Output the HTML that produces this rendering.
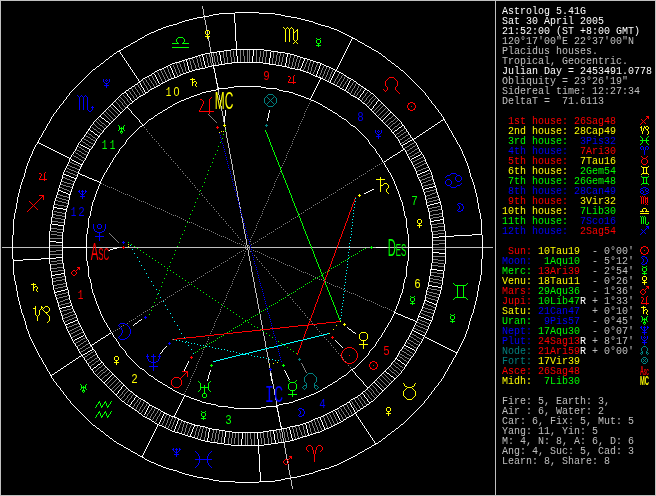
<!DOCTYPE html>
<html><head><meta charset="utf-8"><title>Astrolog 5.41G</title>
<style>
html,body{margin:0;padding:0;background:#000;overflow:hidden}
svg{display:block}
.m{font-family:"Liberation Mono",monospace;font-size:10px;white-space:pre}
.h{font-family:"Liberation Sans",sans-serif;font-size:12px;text-anchor:middle}
.c{font-family:"Liberation Sans",sans-serif;font-variant:small-caps;text-anchor:middle}
</style></head><body>
<svg width="656" height="496" viewBox="0 0 656 496">
<rect width="656" height="496" fill="#000"/>
<g fill="none" stroke-width="1" shape-rendering="crispEdges" transform="translate(0,0.5)">
<path stroke="#c0c0c0" d="M0 0h656M0 1h1M495 1h1M655 1h1M0 2h1M495 2h1M655 2h1M0 3h1M495 3h1M655 3h1M0 4h1M495 4h1M655 4h1M0 5h1M495 5h1M655 5h1M0 6h1M202 6h1M495 6h1M655 6h1M0 7h1M202 7h1M495 7h1M655 7h1M0 8h1M202 8h1M495 8h1M655 8h1M0 9h1M203 9h1M495 9h1M655 9h1M0 10h1M203 10h1M495 10h1M655 10h1M0 11h1M203 11h1M495 11h1M655 11h1M0 12h1M203 12h1M495 12h1M655 12h1M0 13h1M203 13h1M495 13h1M655 13h1M0 14h1M203 14h1M495 14h1M655 14h1M0 15h1M204 15h1M495 15h1M655 15h1M0 16h1M495 16h1M655 16h1M0 17h1M204 17h1M495 17h1M655 17h1M0 18h1M204 18h1M495 18h1M655 18h1M0 19h1M204 19h1M495 19h1M655 19h1M0 20h1M205 20h1M495 20h1M655 20h1M0 21h1M205 21h1M495 21h1M655 21h1M0 22h1M205 22h1M495 22h1M655 22h1M0 23h1M205 23h1M495 23h1M655 23h1M0 24h1M205 24h1M495 24h1M655 24h1M0 25h1M206 25h1M495 25h1M655 25h1M0 26h1M206 26h1M495 26h1M655 26h1M0 27h1M206 27h1M495 27h1M655 27h1M0 28h1M206 28h1M495 28h1M655 28h1M0 29h1M206 29h1M495 29h1M655 29h1M0 30h1M495 30h1M655 30h1M0 31h1M207 31h1M495 31h1M655 31h1M0 32h1M207 32h1M495 32h1M655 32h1M0 33h1M207 33h1M495 33h1M655 33h1M0 34h1M495 34h1M655 34h1M0 35h1M495 35h1M655 35h1M0 36h1M495 36h1M655 36h1M0 37h1M208 37h1M495 37h1M655 37h1M0 38h1M208 38h1M495 38h1M655 38h1M0 39h1M208 39h1M495 39h1M655 39h1M0 40h1M208 40h1M495 40h1M655 40h1M0 41h1M209 41h1M495 41h1M655 41h1M0 42h1M209 42h1M495 42h1M655 42h1M0 43h1M209 43h1M495 43h1M655 43h1M0 44h1M209 44h1M495 44h1M655 44h1M0 45h1M209 45h1M495 45h1M655 45h1M0 46h1M209 46h1M495 46h1M655 46h1M0 47h1M210 47h1M495 47h1M655 47h1M0 48h1M210 48h1M495 48h1M655 48h1M0 49h1M210 49h1M495 49h1M655 49h1M0 50h1M210 50h1M495 50h1M655 50h1M0 51h1M210 51h1M495 51h1M655 51h1M0 52h1M495 52h1M655 52h1M0 53h1M211 53h1M495 53h1M655 53h1M0 54h1M211 54h1M495 54h1M655 54h1M0 55h1M211 55h1M495 55h1M655 55h1M0 56h1M211 56h1M495 56h1M655 56h1M0 57h1M212 57h1M495 57h1M655 57h1M0 58h1M212 58h1M495 58h1M655 58h1M0 59h1M212 59h1M495 59h1M655 59h1M0 60h1M212 60h1M495 60h1M655 60h1M0 61h1M212 61h1M495 61h1M655 61h1M0 62h1M212 62h1M495 62h1M655 62h1M0 63h1M213 63h1M495 63h1M655 63h1M0 64h1M213 64h1M495 64h1M655 64h1M0 65h1M495 65h1M655 65h1M0 66h1M495 66h1M655 66h1M0 67h1M495 67h1M655 67h1M0 68h1M214 68h1M495 68h1M655 68h1M0 69h1M495 69h1M655 69h1M0 70h1M495 70h1M655 70h1M0 71h1M495 71h1M655 71h1M0 72h1M495 72h1M655 72h1M0 73h1M495 73h1M655 73h1M0 74h1M495 74h1M655 74h1M0 75h1M495 75h1M655 75h1M0 76h1M495 76h1M655 76h1M0 77h1M495 77h1M655 77h1M0 78h1M215 78h1M495 78h1M655 78h1M0 79h1M495 79h1M655 79h1M0 80h1M495 80h1M655 80h1M0 81h1M495 81h1M655 81h1M0 82h1M495 82h1M655 82h1M0 83h1M216 83h1M495 83h1M655 83h1M0 84h1M495 84h1M655 84h1M0 85h1M495 85h1M655 85h1M0 86h1M495 86h1M655 86h1M0 87h1M217 87h1M495 87h1M655 87h1M0 88h1M217 88h1M495 88h1M655 88h1M0 89h1M495 89h1M655 89h1M0 90h1M218 90h1M495 90h1M655 90h1M0 91h1M218 91h1M495 91h1M655 91h1M0 92h1M218 92h1M495 92h1M655 92h1M0 93h1M218 93h1M495 93h1M655 93h1M0 94h1M218 94h1M495 94h1M655 94h1M0 95h1M219 95h1M495 95h1M655 95h1M0 96h1M219 96h1M495 96h1M655 96h1M0 97h1M219 97h1M495 97h1M655 97h1M0 98h1M219 98h1M495 98h1M655 98h1M0 99h1M219 99h1M495 99h1M655 99h1M0 100h1M220 100h1M495 100h1M655 100h1M0 101h1M220 101h1M495 101h1M655 101h1M0 102h1M220 102h1M495 102h1M655 102h1M0 103h1M220 103h1M495 103h1M655 103h1M0 104h1M220 104h1M495 104h1M655 104h1M0 105h1M220 105h1M495 105h1M655 105h1M0 106h1M221 106h1M495 106h1M655 106h1M0 107h1M221 107h1M495 107h1M655 107h1M0 108h1M221 108h1M495 108h1M655 108h1M0 109h1M221 109h1M495 109h1M655 109h1M0 110h1M221 110h1M495 110h1M655 110h1M0 111h1M222 111h1M495 111h1M655 111h1M0 112h1M222 112h1M495 112h1M655 112h1M0 113h1M222 113h1M495 113h1M655 113h1M0 114h1M222 114h1M495 114h1M655 114h1M0 115h1M222 115h1M495 115h1M655 115h1M0 116h1M223 116h1M495 116h1M655 116h1M0 117h1M223 117h1M495 117h1M655 117h1M0 118h1M223 118h1M495 118h1M655 118h1M0 119h1M223 119h1M495 119h1M655 119h1M0 120h1M223 120h1M495 120h1M655 120h1M0 121h1M223 121h1M495 121h1M655 121h1M0 122h1M224 122h1M495 122h1M655 122h1M0 123h1M224 123h1M495 123h1M655 123h1M0 124h1M495 124h1M655 124h1M0 125h1M495 125h1M655 125h1M0 126h1M495 126h1M655 126h1M0 127h1M225 127h1M495 127h1M655 127h1M0 128h1M225 128h1M495 128h1M655 128h1M0 129h1M225 129h1M495 129h1M655 129h1M0 130h1M495 130h1M655 130h1M0 131h1M225 131h1M495 131h1M655 131h1M0 132h1M226 132h1M495 132h1M655 132h1M0 133h1M226 133h1M495 133h1M655 133h1M0 134h1M226 134h1M495 134h1M655 134h1M0 135h1M226 135h1M495 135h1M655 135h1M0 136h1M226 136h1M495 136h1M655 136h1M0 137h1M226 137h1M495 137h1M655 137h1M0 138h1M227 138h1M495 138h1M655 138h1M0 139h1M227 139h1M495 139h1M655 139h1M0 140h1M227 140h1M495 140h1M655 140h1M0 141h1M227 141h1M495 141h1M655 141h1M0 142h1M227 142h1M495 142h1M655 142h1M0 143h1M228 143h1M495 143h1M655 143h1M0 144h1M228 144h1M495 144h1M655 144h1M0 145h1M228 145h1M495 145h1M655 145h1M0 146h1M228 146h1M495 146h1M655 146h1M0 147h1M228 147h1M495 147h1M655 147h1M0 148h1M229 148h1M495 148h1M655 148h1M0 149h1M229 149h1M495 149h1M655 149h1M0 150h1M229 150h1M495 150h1M655 150h1M0 151h1M229 151h1M495 151h1M655 151h1M0 152h1M229 152h1M495 152h1M655 152h1M0 153h1M229 153h1M495 153h1M655 153h1M0 154h1M230 154h1M495 154h1M655 154h1M0 155h1M230 155h1M495 155h1M655 155h1M0 156h1M230 156h1M495 156h1M655 156h1M0 157h1M230 157h1M495 157h1M655 157h1M0 158h1M230 158h1M495 158h1M655 158h1M0 159h1M231 159h1M495 159h1M655 159h1M0 160h1M231 160h1M495 160h1M655 160h1M0 161h1M231 161h1M495 161h1M655 161h1M0 162h1M231 162h1M495 162h1M655 162h1M0 163h1M231 163h1M495 163h1M655 163h1M0 164h1M232 164h1M495 164h1M655 164h1M0 165h1M232 165h1M495 165h1M655 165h1M0 166h1M232 166h1M495 166h1M655 166h1M0 167h1M232 167h1M495 167h1M655 167h1M0 168h1M232 168h1M495 168h1M655 168h1M0 169h1M232 169h1M495 169h1M655 169h1M0 170h1M233 170h1M495 170h1M655 170h1M0 171h1M233 171h1M495 171h1M655 171h1M0 172h1M233 172h1M495 172h1M655 172h1M0 173h1M233 173h1M495 173h1M655 173h1M0 174h1M233 174h1M495 174h1M655 174h1M0 175h1M234 175h1M495 175h1M655 175h1M0 176h1M234 176h1M495 176h1M655 176h1M0 177h1M234 177h1M495 177h1M655 177h1M0 178h1M234 178h1M495 178h1M655 178h1M0 179h1M234 179h1M495 179h1M655 179h1M0 180h1M234 180h1M495 180h1M655 180h1M0 181h1M235 181h1M495 181h1M655 181h1M0 182h1M235 182h1M495 182h1M655 182h1M0 183h1M235 183h1M495 183h1M655 183h1M0 184h1M235 184h1M495 184h1M655 184h1M0 185h1M235 185h1M495 185h1M655 185h1M0 186h1M236 186h1M495 186h1M655 186h1M0 187h1M236 187h1M495 187h1M655 187h1M0 188h1M236 188h1M495 188h1M655 188h1M0 189h1M236 189h1M495 189h1M655 189h1M0 190h1M236 190h1M495 190h1M655 190h1M0 191h1M237 191h1M495 191h1M655 191h1M0 192h1M237 192h1M495 192h1M655 192h1M0 193h1M237 193h1M495 193h1M655 193h1M0 194h1M237 194h1M495 194h1M655 194h1M0 195h1M237 195h1M495 195h1M655 195h1M0 196h1M237 196h1M495 196h1M655 196h1M0 197h1M238 197h1M495 197h1M655 197h1M0 198h1M238 198h1M495 198h1M655 198h1M0 199h1M238 199h1M495 199h1M655 199h1M0 200h1M238 200h1M495 200h1M655 200h1M0 201h1M495 201h1M655 201h1M0 202h1M239 202h1M495 202h1M655 202h1M0 203h1M239 203h1M495 203h1M655 203h1M0 204h1M239 204h1M495 204h1M655 204h1M0 205h1M495 205h1M655 205h1M0 206h1M239 206h1M495 206h1M655 206h1M0 207h1M240 207h1M495 207h1M655 207h1M0 208h1M240 208h1M495 208h1M655 208h1M0 209h1M495 209h1M655 209h1M0 210h1M240 210h1M495 210h1M655 210h1M0 211h1M495 211h1M655 211h1M0 212h1M240 212h1M495 212h1M655 212h1M0 213h1M495 213h1M655 213h1M0 214h1M241 214h1M495 214h1M655 214h1M0 215h1M495 215h1M655 215h1M0 216h1M241 216h1M495 216h1M655 216h1M0 217h1M241 217h1M495 217h1M655 217h1M0 218h1M242 218h1M495 218h1M655 218h1M0 219h1M242 219h1M495 219h1M655 219h1M0 220h1M242 220h1M495 220h1M655 220h1M0 221h1M242 221h1M495 221h1M655 221h1M0 222h1M242 222h1M495 222h1M655 222h1M0 223h1M243 223h1M495 223h1M655 223h1M0 224h1M243 224h1M495 224h1M655 224h1M0 225h1M243 225h1M495 225h1M655 225h1M0 226h1M243 226h1M495 226h1M655 226h1M0 227h1M243 227h1M495 227h1M655 227h1M0 228h1M243 228h1M495 228h1M655 228h1M0 229h1M244 229h1M495 229h1M655 229h1M0 230h1M244 230h1M495 230h1M655 230h1M0 231h1M244 231h1M495 231h1M655 231h1M0 232h1M244 232h1M495 232h1M655 232h1M0 233h1M244 233h1M495 233h1M655 233h1M0 234h1M245 234h1M495 234h1M655 234h1M0 235h1M245 235h1M495 235h1M655 235h1M0 236h1M245 236h1M495 236h1M655 236h1M0 237h1M245 237h1M495 237h1M655 237h1M0 238h1M245 238h1M495 238h1M655 238h1M0 239h1M246 239h1M495 239h1M655 239h1M0 240h1M246 240h1M495 240h1M655 240h1M0 241h1M246 241h1M495 241h1M655 241h1M0 242h1M246 242h1M495 242h1M655 242h1M0 243h1M246 243h1M495 243h1M655 243h1M0 244h1M246 244h1M495 244h1M655 244h1M0 245h1M247 245h1M495 245h1M655 245h1M0 246h1M247 246h1M495 246h1M655 246h1M0 247h1M2 247h10M13 247h36M87 247h30M119 247h3M125 247h122M248 247h2M251 247h60M312 247h25M338 247h32M373 247h3M387 247h21M446 247h36M483 247h10M495 247h1M655 247h1M0 248h1M247 248h1M495 248h1M655 248h1M0 249h1M247 249h1M495 249h1M655 249h1M0 250h1M248 250h1M495 250h1M655 250h1M0 251h1M248 251h1M495 251h1M655 251h1M0 252h1M248 252h1M495 252h1M655 252h1M0 253h1M248 253h1M495 253h1M655 253h1M0 254h1M248 254h1M495 254h1M655 254h1M0 255h1M248 255h1M495 255h1M655 255h1M0 256h1M249 256h1M495 256h1M655 256h1M0 257h1M249 257h1M495 257h1M655 257h1M0 258h1M249 258h1M495 258h1M655 258h1M0 259h1M249 259h1M495 259h1M655 259h1M0 260h1M249 260h1M495 260h1M655 260h1M0 261h1M250 261h1M495 261h1M655 261h1M0 262h1M250 262h1M495 262h1M655 262h1M0 263h1M250 263h1M495 263h1M655 263h1M0 264h1M250 264h1M495 264h1M655 264h1M0 265h1M250 265h1M495 265h1M655 265h1M0 266h1M251 266h1M495 266h1M655 266h1M0 267h1M251 267h1M495 267h1M655 267h1M0 268h1M251 268h1M495 268h1M655 268h1M0 269h1M251 269h1M495 269h1M655 269h1M0 270h1M251 270h1M495 270h1M655 270h1M0 271h1M251 271h1M495 271h1M655 271h1M0 272h1M252 272h1M495 272h1M655 272h1M0 273h1M252 273h1M495 273h1M655 273h1M0 274h1M252 274h1M495 274h1M655 274h1M0 275h1M252 275h1M495 275h1M655 275h1M0 276h1M252 276h1M495 276h1M655 276h1M0 277h1M253 277h1M495 277h1M655 277h1M0 278h1M253 278h1M495 278h1M655 278h1M0 279h1M253 279h1M495 279h1M655 279h1M0 280h1M253 280h1M495 280h1M655 280h1M0 281h1M253 281h1M495 281h1M655 281h1M0 282h1M254 282h1M495 282h1M655 282h1M0 283h1M254 283h1M495 283h1M655 283h1M0 284h1M254 284h1M495 284h1M655 284h1M0 285h1M254 285h1M495 285h1M655 285h1M0 286h1M254 286h1M495 286h1M655 286h1M0 287h1M254 287h1M495 287h1M655 287h1M0 288h1M255 288h1M495 288h1M655 288h1M0 289h1M255 289h1M495 289h1M655 289h1M0 290h1M255 290h1M495 290h1M655 290h1M0 291h1M255 291h1M495 291h1M655 291h1M0 292h1M255 292h1M495 292h1M655 292h1M0 293h1M256 293h1M495 293h1M655 293h1M0 294h1M256 294h1M495 294h1M655 294h1M0 295h1M256 295h1M495 295h1M655 295h1M0 296h1M256 296h1M495 296h1M655 296h1M0 297h1M256 297h1M495 297h1M655 297h1M0 298h1M257 298h1M495 298h1M655 298h1M0 299h1M257 299h1M495 299h1M655 299h1M0 300h1M257 300h1M495 300h1M655 300h1M0 301h1M257 301h1M495 301h1M655 301h1M0 302h1M257 302h1M495 302h1M655 302h1M0 303h1M257 303h1M495 303h1M655 303h1M0 304h1M258 304h1M495 304h1M655 304h1M0 305h1M258 305h1M495 305h1M655 305h1M0 306h1M258 306h1M495 306h1M655 306h1M0 307h1M258 307h1M495 307h1M655 307h1M0 308h1M258 308h1M495 308h1M655 308h1M0 309h1M259 309h1M495 309h1M655 309h1M0 310h1M259 310h1M495 310h1M655 310h1M0 311h1M259 311h1M495 311h1M655 311h1M0 312h1M259 312h1M495 312h1M655 312h1M0 313h1M495 313h1M655 313h1M0 314h1M260 314h1M495 314h1M655 314h1M0 315h1M260 315h1M495 315h1M655 315h1M0 316h1M260 316h1M495 316h1M655 316h1M0 317h1M260 317h1M495 317h1M655 317h1M0 318h1M260 318h1M495 318h1M655 318h1M0 319h1M260 319h1M495 319h1M655 319h1M0 320h1M261 320h1M495 320h1M655 320h1M0 321h1M261 321h1M495 321h1M655 321h1M0 322h1M261 322h1M495 322h1M655 322h1M0 323h1M261 323h1M495 323h1M655 323h1M0 324h1M261 324h1M495 324h1M655 324h1M0 325h1M262 325h1M495 325h1M655 325h1M0 326h1M262 326h1M495 326h1M655 326h1M0 327h1M262 327h1M495 327h1M655 327h1M0 328h1M262 328h1M495 328h1M655 328h1M0 329h1M495 329h1M655 329h1M0 330h1M262 330h1M495 330h1M655 330h1M0 331h1M495 331h1M655 331h1M0 332h1M263 332h1M495 332h1M655 332h1M0 333h1M263 333h1M495 333h1M655 333h1M0 334h1M263 334h1M495 334h1M655 334h1M0 335h1M263 335h1M495 335h1M655 335h1M0 336h1M264 336h1M495 336h1M655 336h1M0 337h1M264 337h1M495 337h1M655 337h1M0 338h1M264 338h1M495 338h1M655 338h1M0 339h1M264 339h1M495 339h1M655 339h1M0 340h1M264 340h1M495 340h1M655 340h1M0 341h1M265 341h1M495 341h1M655 341h1M0 342h1M265 342h1M495 342h1M655 342h1M0 343h1M265 343h1M495 343h1M655 343h1M0 344h1M265 344h1M495 344h1M655 344h1M0 345h1M265 345h1M495 345h1M655 345h1M0 346h1M265 346h1M495 346h1M655 346h1M0 347h1M266 347h1M495 347h1M655 347h1M0 348h1M495 348h1M655 348h1M0 349h1M266 349h1M495 349h1M655 349h1M0 350h1M266 350h1M495 350h1M655 350h1M0 351h1M266 351h1M495 351h1M655 351h1M0 352h1M267 352h1M495 352h1M655 352h1M0 353h1M267 353h1M495 353h1M655 353h1M0 354h1M267 354h1M495 354h1M655 354h1M0 355h1M267 355h1M495 355h1M655 355h1M0 356h1M267 356h1M495 356h1M655 356h1M0 357h1M268 357h1M495 357h1M655 357h1M0 358h1M268 358h1M495 358h1M655 358h1M0 359h1M268 359h1M495 359h1M655 359h1M0 360h1M268 360h1M495 360h1M655 360h1M0 361h1M268 361h1M495 361h1M655 361h1M0 362h1M268 362h1M495 362h1M655 362h1M0 363h1M269 363h1M495 363h1M655 363h1M0 364h1M495 364h1M655 364h1M0 365h1M269 365h1M495 365h1M655 365h1M0 366h1M269 366h1M495 366h1M655 366h1M0 367h1M269 367h1M495 367h1M655 367h1M0 368h1M495 368h1M655 368h1M0 369h1M495 369h1M655 369h1M0 370h1M495 370h1M655 370h1M0 371h1M270 371h1M495 371h1M655 371h1M0 372h1M270 372h1M495 372h1M655 372h1M0 373h1M271 373h1M495 373h1M655 373h1M0 374h1M271 374h1M495 374h1M655 374h1M0 375h1M271 375h1M495 375h1M655 375h1M0 376h1M495 376h1M655 376h1M0 377h1M495 377h1M655 377h1M0 378h1M495 378h1M655 378h1M0 379h1M272 379h1M495 379h1M655 379h1M0 380h1M272 380h1M495 380h1M655 380h1M0 381h1M495 381h1M655 381h1M0 382h1M495 382h1M655 382h1M0 383h1M495 383h1M655 383h1M0 384h1M273 384h1M495 384h1M655 384h1M0 385h1M273 385h1M495 385h1M655 385h1M0 386h1M273 386h1M495 386h1M655 386h1M0 387h1M273 387h1M495 387h1M655 387h1M0 388h1M273 388h1M495 388h1M655 388h1M0 389h1M274 389h1M495 389h1M655 389h1M0 390h1M274 390h1M495 390h1M655 390h1M0 391h1M274 391h1M495 391h1M655 391h1M0 392h1M274 392h1M495 392h1M655 392h1M0 393h1M274 393h1M495 393h1M655 393h1M0 394h1M274 394h1M495 394h1M655 394h1M0 395h1M275 395h1M495 395h1M655 395h1M0 396h1M275 396h1M495 396h1M655 396h1M0 397h1M275 397h1M495 397h1M655 397h1M0 398h1M275 398h1M495 398h1M655 398h1M0 399h1M275 399h1M495 399h1M655 399h1M0 400h1M276 400h1M495 400h1M655 400h1M0 401h1M276 401h1M495 401h1M655 401h1M0 402h1M276 402h1M495 402h1M655 402h1M0 403h1M276 403h1M495 403h1M655 403h1M0 404h1M276 404h1M495 404h1M655 404h1M0 405h1M495 405h1M655 405h1M0 406h1M277 406h1M495 406h1M655 406h1M0 407h1M277 407h1M495 407h1M655 407h1M0 408h1M495 408h1M655 408h1M0 409h1M495 409h1M655 409h1M0 410h1M495 410h1M655 410h1M0 411h1M278 411h1M495 411h1M655 411h1M0 412h1M495 412h1M655 412h1M0 413h1M495 413h1M655 413h1M0 414h1M495 414h1M655 414h1M0 415h1M495 415h1M655 415h1M0 416h1M279 416h1M495 416h1M655 416h1M0 417h1M495 417h1M655 417h1M0 418h1M495 418h1M655 418h1M0 419h1M495 419h1M655 419h1M0 420h1M495 420h1M655 420h1M0 421h1M495 421h1M655 421h1M0 422h1M495 422h1M655 422h1M0 423h1M495 423h1M655 423h1M0 424h1M495 424h1M655 424h1M0 425h1M495 425h1M655 425h1M0 426h1M280 426h1M495 426h1M655 426h1M0 427h1M495 427h1M655 427h1M0 428h1M495 428h1M655 428h1M0 429h1M495 429h1M655 429h1M0 430h1M281 430h1M495 430h1M655 430h1M0 431h1M281 431h1M495 431h1M655 431h1M0 432h1M282 432h1M495 432h1M655 432h1M0 433h1M282 433h1M495 433h1M655 433h1M0 434h1M282 434h1M495 434h1M655 434h1M0 435h1M282 435h1M495 435h1M655 435h1M0 436h1M282 436h1M495 436h1M655 436h1M0 437h1M282 437h1M495 437h1M655 437h1M0 438h1M283 438h1M495 438h1M655 438h1M0 439h1M283 439h1M495 439h1M655 439h1M0 440h1M283 440h1M495 440h1M655 440h1M0 441h1M283 441h1M495 441h1M655 441h1M0 442h1M495 442h1M655 442h1M0 443h1M284 443h1M495 443h1M655 443h1M0 444h1M284 444h1M495 444h1M655 444h1M0 445h1M284 445h1M495 445h1M655 445h1M0 446h1M284 446h1M495 446h1M655 446h1M0 447h1M284 447h1M495 447h1M655 447h1M0 448h1M285 448h1M495 448h1M655 448h1M0 449h1M285 449h1M495 449h1M655 449h1M0 450h1M285 450h1M495 450h1M655 450h1M0 451h1M285 451h1M495 451h1M655 451h1M0 452h1M285 452h1M495 452h1M655 452h1M0 453h1M285 453h1M495 453h1M655 453h1M0 454h1M286 454h1M495 454h1M655 454h1M0 455h1M286 455h1M495 455h1M655 455h1M0 456h1M286 456h1M495 456h1M655 456h1M0 457h1M286 457h1M495 457h1M655 457h1M0 458h1M286 458h1M495 458h1M655 458h1M0 459h1M287 459h1M495 459h1M655 459h1M0 460h1M495 460h1M655 460h1M0 461h1M287 461h1M495 461h1M655 461h1M0 462h1M287 462h1M495 462h1M655 462h1M0 463h1M495 463h1M655 463h1M0 464h1M288 464h1M495 464h1M655 464h1M0 465h1M288 465h1M495 465h1M655 465h1M0 466h1M288 466h1M495 466h1M655 466h1M0 467h1M288 467h1M495 467h1M655 467h1M0 468h1M288 468h1M495 468h1M655 468h1M0 469h1M288 469h1M495 469h1M655 469h1M0 470h1M289 470h1M495 470h1M655 470h1M0 471h1M289 471h1M495 471h1M655 471h1M0 472h1M289 472h1M495 472h1M655 472h1M0 473h1M289 473h1M495 473h1M655 473h1M0 474h1M289 474h1M495 474h1M655 474h1M0 475h1M290 475h1M495 475h1M655 475h1M0 476h1M290 476h1M495 476h1M655 476h1M0 477h1M290 477h1M495 477h1M655 477h1M0 478h1M495 478h1M655 478h1M0 479h1M290 479h1M495 479h1M655 479h1M0 480h1M291 480h1M495 480h1M655 480h1M0 481h1M291 481h1M495 481h1M655 481h1M0 482h1M291 482h1M495 482h1M655 482h1M0 483h1M291 483h1M495 483h1M655 483h1M0 484h1M291 484h1M495 484h1M655 484h1M0 485h1M291 485h1M495 485h1M655 485h1M0 486h1M292 486h1M495 486h1M655 486h1M0 487h1M292 487h1M495 487h1M655 487h1M0 488h1M292 488h1M495 488h1M655 488h1M0 489h1M495 489h1M655 489h1M0 490h1M495 490h1M655 490h1M0 491h1M495 491h1M655 491h1M0 492h1M495 492h1M655 492h1M0 493h1M495 493h1M655 493h1M0 494h1M495 494h1M655 494h1M0 495h656"/>
<path stroke="#ffffff" d="M235 12h24M219 13h16M259 13h16M213 14h6M234 14h1M275 14h6M209 15h4M234 15h1M281 15h4M203 16h6M234 16h1M285 16h6M197 17h6M234 17h1M291 17h6M193 18h4M234 18h1M297 18h4M189 19h4M234 19h1M301 19h4M185 20h4M234 20h1M305 20h4M182 21h3M234 21h1M309 21h4M179 22h3M234 22h1M313 22h2M177 23h2M235 23h1M315 23h3M173 24h4M235 24h1M318 24h3M169 25h4M235 25h1M321 25h4M166 26h3M235 26h1M325 26h4M163 27h3M235 27h1M329 27h2M161 28h2M235 28h1M331 28h3M158 29h3M235 29h1M334 29h3M156 30h2M235 30h1M337 30h2M154 31h2M235 31h1M339 31h2M151 32h3M235 32h1M341 32h2M149 33h2M235 33h1M343 33h2M147 34h2M235 34h1M345 34h2M145 35h2M235 35h1M347 35h2M144 36h1M235 36h1M349 36h2M142 37h2M235 37h1M351 37h2M140 38h2M235 38h1M352 38h3M138 39h2M235 39h1M351 39h1M355 39h2M137 40h1M235 40h1M351 40h1M357 40h1M135 41h2M236 41h1M350 41h1M358 41h2M133 42h2M236 42h1M350 42h1M360 42h2M131 43h2M236 43h1M349 43h1M362 43h2M130 44h1M236 44h1M349 44h1M364 44h1M128 45h2M236 45h1M348 45h1M365 45h2M126 46h2M236 46h1M348 46h1M367 46h2M124 47h2M236 47h1M347 47h1M369 47h2M123 48h1M236 48h1M347 48h1M371 48h1M121 49h2M231 49h33M346 49h1M372 49h2M119 50h2M224 50h7M236 50h1M253 50h1M264 50h7M346 50h1M374 50h2M117 51h3M217 51h7M236 51h1M253 51h1M271 51h7M345 51h1M376 51h2M116 52h1M120 52h1M210 52h7M219 52h1M236 52h1M253 52h1M270 52h1M278 52h7M345 52h1M378 52h1M114 53h2M120 53h1M205 53h5M219 53h1M236 53h1M253 53h1M270 53h1M285 53h5M344 53h1M379 53h2M113 54h1M121 54h1M201 54h4M219 54h1M236 54h1M253 54h1M270 54h1M287 54h1M290 54h4M344 54h1M381 54h1M112 55h1M122 55h1M198 55h3M202 55h1M220 55h1M236 55h1M253 55h1M270 55h1M287 55h1M294 55h3M343 55h1M382 55h1M110 56h2M122 56h1M195 56h3M202 56h1M220 56h1M237 56h1M252 56h1M270 56h1M287 56h1M297 56h3M343 56h1M383 56h2M109 57h1M123 57h1M192 57h3M203 57h1M220 57h1M237 57h1M252 57h1M270 57h1M286 57h1M300 57h3M342 57h1M385 57h1M108 58h1M124 58h1M188 58h4M203 58h1M220 58h1M237 58h1M252 58h1M269 58h1M286 58h1M303 58h4M342 58h1M386 58h1M106 59h2M124 59h1M185 59h3M203 59h1M220 59h1M237 59h1M252 59h1M269 59h1M286 59h1M304 59h1M307 59h3M341 59h1M387 59h1M105 60h1M125 60h1M182 60h3M186 60h1M203 60h1M220 60h1M237 60h1M252 60h1M269 60h1M286 60h1M304 60h1M310 60h3M341 60h1M388 60h2M104 61h1M126 61h1M179 61h3M186 61h1M204 61h1M221 61h1M237 61h1M252 61h1M269 61h1M286 61h1M303 61h1M313 61h3M340 61h1M390 61h1M103 62h1M126 62h1M175 62h4M187 62h1M204 62h1M221 62h1M232 62h31M269 62h1M286 62h1M303 62h1M316 62h4M340 62h1M391 62h1M101 63h2M127 63h1M172 63h3M187 63h1M204 63h1M221 63h1M225 63h7M263 63h7M285 63h1M302 63h1M320 63h2M339 63h1M392 63h2M100 64h1M128 64h1M170 64h2M187 64h1M204 64h1M219 64h6M269 64h7M285 64h1M302 64h1M320 64h1M322 64h2M339 64h1M394 64h1M99 65h1M128 65h1M168 65h2M187 65h1M205 65h1M212 65h7M276 65h6M285 65h1M302 65h1M320 65h1M324 65h2M338 65h1M395 65h1M97 66h2M129 66h1M166 66h2M170 66h1M188 66h1M205 66h1M208 66h4M213 66h1M282 66h5M301 66h1M319 66h1M326 66h3M338 66h1M396 66h2M96 67h1M130 67h1M164 67h2M170 67h1M188 67h1M205 67h3M213 67h1M287 67h3M301 67h1M319 67h1M329 67h2M337 67h1M398 67h1M95 68h1M130 68h1M162 68h2M171 68h1M188 68h1M200 68h5M213 68h1M290 68h5M300 68h1M319 68h1M331 68h2M337 68h1M399 68h1M93 69h2M131 69h1M159 69h3M171 69h1M188 69h1M195 69h5M214 69h1M295 69h6M318 69h1M333 69h2M336 69h1M400 69h1M92 70h1M132 70h1M157 70h2M172 70h1M189 70h1M192 70h3M214 70h1M300 70h3M318 70h1M335 70h2M401 70h2M91 71h1M132 71h1M155 71h2M172 71h1M189 71h3M214 71h1M303 71h3M317 71h1M335 71h1M337 71h2M403 71h1M90 72h1M133 72h1M154 72h1M172 72h1M186 72h3M214 72h1M306 72h3M317 72h1M334 72h1M339 72h2M404 72h1M89 73h1M134 73h1M152 73h2M173 73h1M183 73h3M215 73h1M309 73h2M317 73h1M334 73h1M341 73h2M405 73h1M88 74h1M134 74h1M151 74h1M154 74h1M173 74h1M181 74h2M215 74h1M311 74h2M316 74h1M333 74h1M343 74h1M406 74h1M87 75h1M135 75h1M149 75h2M155 75h1M174 75h1M179 75h2M215 75h1M313 75h2M316 75h1M333 75h1M344 75h2M407 75h1M86 76h1M136 76h1M147 76h2M155 76h1M174 76h1M177 76h2M215 76h1M315 76h3M332 76h1M346 76h1M408 76h1M85 77h1M136 77h1M145 77h2M156 77h1M174 77h3M215 77h1M318 77h3M332 77h1M347 77h2M409 77h1M84 78h1M137 78h1M143 78h2M156 78h1M171 78h3M216 78h1M320 78h3M331 78h1M349 78h2M410 78h1M83 79h1M138 79h1M142 79h1M157 79h1M169 79h2M216 79h1M320 79h1M323 79h2M331 79h1M351 79h2M411 79h1M82 80h1M138 80h1M141 80h1M157 80h1M167 80h2M216 80h1M319 80h1M325 80h2M330 80h1M350 80h1M353 80h1M412 80h1M81 81h1M139 81h2M158 81h1M165 81h2M216 81h1M319 81h1M327 81h2M330 81h1M349 81h1M354 81h2M413 81h1M80 82h1M138 82h2M158 82h1M163 82h2M216 82h1M318 82h1M329 82h2M349 82h1M356 82h1M414 82h1M79 83h1M137 83h1M140 83h1M159 83h1M161 83h2M217 83h1M318 83h1M331 83h2M348 83h1M357 83h1M415 83h1M78 84h1M135 84h2M140 84h1M160 84h1M217 84h1M317 84h1M333 84h2M348 84h1M358 84h2M416 84h1M77 85h1M134 85h1M141 85h1M158 85h2M217 85h1M317 85h1M335 85h2M347 85h1M360 85h1M417 85h1M76 86h1M132 86h2M141 86h1M156 86h2M217 86h1M234 86h27M316 86h1M337 86h2M347 86h1M361 86h2M418 86h1M75 87h1M131 87h1M142 87h1M154 87h2M218 87h1M228 87h6M261 87h5M316 87h1M339 87h1M346 87h1M363 87h1M419 87h1M74 88h1M129 88h2M143 88h1M152 88h2M218 88h10M266 88h11M315 88h1M340 88h2M346 88h1M364 88h2M420 88h1M73 89h1M128 89h1M143 89h1M150 89h2M216 89h3M277 89h2M315 89h1M342 89h2M345 89h1M365 89h2M421 89h1M72 90h1M126 90h2M144 90h1M149 90h1M211 90h5M279 90h4M314 90h1M344 90h2M364 90h1M367 90h2M422 90h1M71 91h1M125 91h1M144 91h1M148 91h1M206 91h5M283 91h6M314 91h1M346 91h1M363 91h1M369 91h1M423 91h1M70 92h1M124 92h2M145 92h3M202 92h4M289 92h4M313 92h1M347 92h2M363 92h1M370 92h1M424 92h1M69 93h1M122 93h2M126 93h1M145 93h1M200 93h2M293 93h2M313 93h1M349 93h1M362 93h1M371 93h2M425 93h1M69 94h1M121 94h1M127 94h1M143 94h2M197 94h3M295 94h3M312 94h1M350 94h1M361 94h1M373 94h1M425 94h1M68 95h1M120 95h1M127 95h1M141 95h2M194 95h3M298 95h3M312 95h1M351 95h2M360 95h1M374 95h1M426 95h1M67 96h1M119 96h1M128 96h1M139 96h2M191 96h3M301 96h3M311 96h1M353 96h2M360 96h1M375 96h1M427 96h1M66 97h1M118 97h1M129 97h1M138 97h1M189 97h2M304 97h2M311 97h1M355 97h2M359 97h1M376 97h1M428 97h1M66 98h1M117 98h1M130 98h1M137 98h1M186 98h3M306 98h3M310 98h1M357 98h2M377 98h1M428 98h1M65 99h1M116 99h1M130 99h1M135 99h2M184 99h2M309 99h2M358 99h2M378 99h1M429 99h1M64 100h1M115 100h1M131 100h1M134 100h1M181 100h3M311 100h3M360 100h1M378 100h2M430 100h1M63 101h1M114 101h1M132 101h2M179 101h2M314 101h2M361 101h1M377 101h1M380 101h1M431 101h1M63 102h1M113 102h1M132 102h1M177 102h2M316 102h2M362 102h1M376 102h1M381 102h1M431 102h1M62 103h1M112 103h1M130 103h2M175 103h2M318 103h2M363 103h2M376 103h1M382 103h1M432 103h1M61 104h1M111 104h2M129 104h1M173 104h2M320 104h2M365 104h1M375 104h1M383 104h1M433 104h1M60 105h1M110 105h1M113 105h1M128 105h1M172 105h1M322 105h1M366 105h1M374 105h1M384 105h1M434 105h1M59 106h1M109 106h1M114 106h1M127 106h1M170 106h2M323 106h2M367 106h1M373 106h1M385 106h1M435 106h1M59 107h1M108 107h1M115 107h1M126 107h2M168 107h2M325 107h2M368 107h1M373 107h1M386 107h1M435 107h1M58 108h1M107 108h1M116 108h1M125 108h1M128 108h1M167 108h1M327 108h1M369 108h1M372 108h1M387 108h1M436 108h1M57 109h1M106 109h1M117 109h1M124 109h1M129 109h1M165 109h2M328 109h2M370 109h2M388 109h1M437 109h1M56 110h1M105 110h1M118 110h1M123 110h1M130 110h1M163 110h2M225 110h1M269 110h1M330 110h2M371 110h1M389 110h1M438 110h1M56 111h1M104 111h1M119 111h1M122 111h1M131 111h1M162 111h1M225 111h1M269 111h1M332 111h1M372 111h1M390 111h1M438 111h1M55 112h1M103 112h1M120 112h2M131 112h1M160 112h2M225 112h1M269 112h1M333 112h2M373 112h1M390 112h2M439 112h1M54 113h1M102 113h1M120 113h1M132 113h1M158 113h2M225 113h1M268 113h1M335 113h2M374 113h1M389 113h1M392 113h1M440 113h1M53 114h1M101 114h1M119 114h1M133 114h1M157 114h1M225 114h1M268 114h1M337 114h1M375 114h1M388 114h1M393 114h1M441 114h1M53 115h1M100 115h1M118 115h1M134 115h1M155 115h2M225 115h1M268 115h1M338 115h1M376 115h1M387 115h1M394 115h1M441 115h1M52 116h1M99 116h2M117 116h1M135 116h1M154 116h1M224 116h1M268 116h1M339 116h2M377 116h1M386 116h1M395 116h1M442 116h1M51 117h1M98 117h1M101 117h1M116 117h1M136 117h1M153 117h1M224 117h1M268 117h1M341 117h1M378 117h1M385 117h1M396 117h1M443 117h1M51 118h1M97 118h1M102 118h2M115 118h1M137 118h1M151 118h2M224 118h1M267 118h1M342 118h2M379 118h1M384 118h1M397 118h1M443 118h1M50 119h1M96 119h1M104 119h1M114 119h1M138 119h1M149 119h2M224 119h1M267 119h1M344 119h2M380 119h1M383 119h1M398 119h1M443 119h2M50 120h1M95 120h1M105 120h1M113 120h1M139 120h1M148 120h1M224 120h1M267 120h1M346 120h1M381 120h2M399 120h1M441 120h2M444 120h1M49 121h1M94 121h1M106 121h2M112 121h1M139 121h1M147 121h1M224 121h1M347 121h1M382 121h1M400 121h1M440 121h1M445 121h1M49 122h1M93 122h1M108 122h1M111 122h1M140 122h1M146 122h1M348 122h1M383 122h1M401 122h1M438 122h2M445 122h1M48 123h1M93 123h1M109 123h2M141 123h1M145 123h1M349 123h1M384 123h1M401 123h1M437 123h1M446 123h1M47 124h1M92 124h1M109 124h1M142 124h1M144 124h1M350 124h1M385 124h1M402 124h1M435 124h2M447 124h1M47 125h1M91 125h1M108 125h1M142 125h2M351 125h2M386 125h1M402 125h2M434 125h1M447 125h1M46 126h1M90 126h1M107 126h1M140 126h2M353 126h2M387 126h1M401 126h1M404 126h1M432 126h2M448 126h1M46 127h1M90 127h1M106 127h1M139 127h1M355 127h1M388 127h1M399 127h2M404 127h1M431 127h1M448 127h1M45 128h1M89 128h1M105 128h1M138 128h1M356 128h1M389 128h1M398 128h1M405 128h1M429 128h2M449 128h1M45 129h1M88 129h2M104 129h1M137 129h1M357 129h1M390 129h1M397 129h1M406 129h1M428 129h1M449 129h1M44 130h1M88 130h1M90 130h1M103 130h1M136 130h1M358 130h1M391 130h1M395 130h2M406 130h1M426 130h2M450 130h1M43 131h1M87 131h1M91 131h2M103 131h1M135 131h1M359 131h1M391 131h1M394 131h1M407 131h1M425 131h1M451 131h1M43 132h1M86 132h1M93 132h1M102 132h1M134 132h1M360 132h1M392 132h2M408 132h1M423 132h2M451 132h1M42 133h1M86 133h1M94 133h1M101 133h1M133 133h1M361 133h1M393 133h1M408 133h1M422 133h1M452 133h1M42 134h1M85 134h1M95 134h2M100 134h1M132 134h1M362 134h1M394 134h1M409 134h1M420 134h2M452 134h1M41 135h1M84 135h1M97 135h1M99 135h1M131 135h1M363 135h1M395 135h1M410 135h1M419 135h1M453 135h1M41 136h1M84 136h1M98 136h2M130 136h1M364 136h1M395 136h1M410 136h1M417 136h2M453 136h1M40 137h1M83 137h1M98 137h1M129 137h1M365 137h1M396 137h1M411 137h1M416 137h1M454 137h1M39 138h1M82 138h1M97 138h1M128 138h1M366 138h1M397 138h1M412 138h1M414 138h2M455 138h1M39 139h1M81 139h1M96 139h1M127 139h1M367 139h1M398 139h1M412 139h2M455 139h1M38 140h1M81 140h1M96 140h1M126 140h1M368 140h1M398 140h1M410 140h2M413 140h1M456 140h1M38 141h1M80 141h1M95 141h1M126 141h1M368 141h1M399 141h1M408 141h2M414 141h1M456 141h1M37 142h2M79 142h1M95 142h1M125 142h1M369 142h1M399 142h1M407 142h1M415 142h1M457 142h1M37 143h1M39 143h2M78 143h1M94 143h1M125 143h1M369 143h1M400 143h1M405 143h2M416 143h1M457 143h1M36 144h1M41 144h2M78 144h1M80 144h1M94 144h1M124 144h1M370 144h1M400 144h1M403 144h2M416 144h1M458 144h1M35 145h1M43 145h2M77 145h1M81 145h2M93 145h1M123 145h1M371 145h1M401 145h2M417 145h1M459 145h1M35 146h1M45 146h2M77 146h1M83 146h2M92 146h1M122 146h1M372 146h1M402 146h1M417 146h1M459 146h1M34 147h1M47 147h2M76 147h1M85 147h2M92 147h1M121 147h1M373 147h1M402 147h1M418 147h1M460 147h1M34 148h1M49 148h2M76 148h1M87 148h2M91 148h1M120 148h1M374 148h1M403 148h1M418 148h1M460 148h1M33 149h1M51 149h2M75 149h1M89 149h2M119 149h1M375 149h1M403 149h2M419 149h1M461 149h1M33 150h1M53 150h2M75 150h1M89 150h1M119 150h1M375 150h1M401 150h2M405 150h1M419 150h1M461 150h1M32 151h1M55 151h2M74 151h1M89 151h1M118 151h1M376 151h1M400 151h1M405 151h1M420 151h1M462 151h1M32 152h1M57 152h2M73 152h1M88 152h1M118 152h1M376 152h1M398 152h2M406 152h1M421 152h1M462 152h1M32 153h1M59 153h2M73 153h1M88 153h1M117 153h1M377 153h1M397 153h1M406 153h1M421 153h1M462 153h1M31 154h1M61 154h2M72 154h1M87 154h1M116 154h1M378 154h1M395 154h2M407 154h1M420 154h1M422 154h1M463 154h1M31 155h1M63 155h2M71 155h1M87 155h1M115 155h1M379 155h1M393 155h2M407 155h1M418 155h2M423 155h1M463 155h1M30 156h1M65 156h2M71 156h1M86 156h1M115 156h1M379 156h1M392 156h1M408 156h1M416 156h2M423 156h1M464 156h1M30 157h1M67 157h2M70 157h1M86 157h1M114 157h1M380 157h1M390 157h2M408 157h1M414 157h2M424 157h1M464 157h1M29 158h1M69 158h2M85 158h1M113 158h1M381 158h1M389 158h1M409 158h1M412 158h2M424 158h1M465 158h1M29 159h1M69 159h1M71 159h1M85 159h1M113 159h1M381 159h1M387 159h2M409 159h1M411 159h1M425 159h1M465 159h1M29 160h1M69 160h1M72 160h2M84 160h1M112 160h1M382 160h1M386 160h1M410 160h1M425 160h1M465 160h1M28 161h1M69 161h1M74 161h2M83 161h1M112 161h1M382 161h1M384 161h2M411 161h1M425 161h1M466 161h1M28 162h1M68 162h1M76 162h2M83 162h1M111 162h1M383 162h1M411 162h1M426 162h1M466 162h1M27 163h1M68 163h1M78 163h2M82 163h1M110 163h1M384 163h1M412 163h1M426 163h1M467 163h1M27 164h1M67 164h1M80 164h3M110 164h1M384 164h1M412 164h1M427 164h1M467 164h1M27 165h1M67 165h1M81 165h1M109 165h1M385 165h1M413 165h1M427 165h1M467 165h1M26 166h1M66 166h1M81 166h1M109 166h1M385 166h1M413 166h1M428 166h1M468 166h1M26 167h1M66 167h1M80 167h1M108 167h1M386 167h1M414 167h1M428 167h1M468 167h1M26 168h1M65 168h1M80 168h1M107 168h1M387 168h1M414 168h1M429 168h1M468 168h1M25 169h1M65 169h1M79 169h1M107 169h1M387 169h1M415 169h1M429 169h1M469 169h1M25 170h1M64 170h1M79 170h1M106 170h1M388 170h1M415 170h1M427 170h2M430 170h1M469 170h1M25 171h1M64 171h1M78 171h1M106 171h1M388 171h1M416 171h1M425 171h2M430 171h1M469 171h1M25 172h1M63 172h1M78 172h1M105 172h1M389 172h1M416 172h1M422 172h3M431 172h1M469 172h1M24 173h1M63 173h1M78 173h2M104 173h1M390 173h1M416 173h1M420 173h2M431 173h1M470 173h1M24 174h1M63 174h3M77 174h1M80 174h2M104 174h1M390 174h1M417 174h3M431 174h1M470 174h1M24 175h1M62 175h1M66 175h3M77 175h1M82 175h3M103 175h1M391 175h1M417 175h1M432 175h1M470 175h1M24 176h1M62 176h1M69 176h2M77 176h1M85 176h2M103 176h1M391 176h1M417 176h1M432 176h1M470 176h1M23 177h1M62 177h1M71 177h3M76 177h1M87 177h2M102 177h1M392 177h1M418 177h1M432 177h1M471 177h1M23 178h1M62 178h1M74 178h3M89 178h3M102 178h1M392 178h1M418 178h1M432 178h1M471 178h1M22 179h1M61 179h1M75 179h1M92 179h2M101 179h1M393 179h1M419 179h1M433 179h1M472 179h1M22 180h1M61 180h1M75 180h1M94 180h3M101 180h1M393 180h1M419 180h1M433 180h1M472 180h1M22 181h1M61 181h1M74 181h1M97 181h2M100 181h1M394 181h1M420 181h1M433 181h1M472 181h1M21 182h1M60 182h1M74 182h1M99 182h2M394 182h1M420 182h1M434 182h1M473 182h1M21 183h1M60 183h1M73 183h1M100 183h1M394 183h1M421 183h1M434 183h1M473 183h1M21 184h1M60 184h1M73 184h1M99 184h1M395 184h1M421 184h1M434 184h1M473 184h1M20 185h1M59 185h1M73 185h1M99 185h1M395 185h1M421 185h1M435 185h1M474 185h1M20 186h1M59 186h1M72 186h1M98 186h1M396 186h1M422 186h1M433 186h3M474 186h1M20 187h1M59 187h1M72 187h1M98 187h1M396 187h1M422 187h1M429 187h4M435 187h1M474 187h1M20 188h1M58 188h1M72 188h1M98 188h1M396 188h1M422 188h1M425 188h4M436 188h1M474 188h1M19 189h1M58 189h1M71 189h1M97 189h1M372 189h2M397 189h1M423 189h2M436 189h1M475 189h1M19 190h1M58 190h3M71 190h1M97 190h1M370 190h2M397 190h1M423 190h1M436 190h1M475 190h1M19 191h1M58 191h1M61 191h2M71 191h1M96 191h1M368 191h2M398 191h1M423 191h1M436 191h1M475 191h1M19 192h1M57 192h1M63 192h3M70 192h1M96 192h1M366 192h2M398 192h1M424 192h1M437 192h1M475 192h1M18 193h1M57 193h1M66 193h2M70 193h1M96 193h1M364 193h2M398 193h1M424 193h1M437 193h1M476 193h1M18 194h1M57 194h1M68 194h3M95 194h1M399 194h1M424 194h1M437 194h1M476 194h1M18 195h1M56 195h1M69 195h1M95 195h1M399 195h1M425 195h1M438 195h1M476 195h1M18 196h1M56 196h1M69 196h1M95 196h1M399 196h1M425 196h1M438 196h1M476 196h1M17 197h1M56 197h1M69 197h1M94 197h1M400 197h1M425 197h1M438 197h1M477 197h1M17 198h1M55 198h1M69 198h1M94 198h1M400 198h1M425 198h1M439 198h1M477 198h1M17 199h1M55 199h1M69 199h1M94 199h1M400 199h1M425 199h1M439 199h1M477 199h1M17 200h1M55 200h1M68 200h1M93 200h1M401 200h1M426 200h1M439 200h1M477 200h1M17 201h1M54 201h1M68 201h1M93 201h1M401 201h1M426 201h1M440 201h1M477 201h1M17 202h1M54 202h1M68 202h1M92 202h1M402 202h1M426 202h1M438 202h3M477 202h1M16 203h1M54 203h1M68 203h1M92 203h1M402 203h1M426 203h1M434 203h4M440 203h1M478 203h1M16 204h1M54 204h1M68 204h1M92 204h1M402 204h1M426 204h1M430 204h4M440 204h1M478 204h1M16 205h1M53 205h1M67 205h1M92 205h1M402 205h1M427 205h3M441 205h1M478 205h1M16 206h1M53 206h1M67 206h1M91 206h1M403 206h1M427 206h1M441 206h1M478 206h1M16 207h1M53 207h4M67 207h1M91 207h1M403 207h1M427 207h1M441 207h1M478 207h1M16 208h1M53 208h1M57 208h6M66 208h1M91 208h1M403 208h1M428 208h1M441 208h1M478 208h1M15 209h1M53 209h1M63 209h4M91 209h1M403 209h1M428 209h1M441 209h1M479 209h1M15 210h1M52 210h1M66 210h1M91 210h1M403 210h1M428 210h1M442 210h1M479 210h1M15 211h1M52 211h1M66 211h1M90 211h1M404 211h1M428 211h1M442 211h1M479 211h1M15 212h1M52 212h1M65 212h1M90 212h1M404 212h1M429 212h1M442 212h1M479 212h1M14 213h1M52 213h1M65 213h1M90 213h1M404 213h1M429 213h1M442 213h1M480 213h1M14 214h1M52 214h1M65 214h1M90 214h1M404 214h1M429 214h1M442 214h1M480 214h1M14 215h1M52 215h1M65 215h1M90 215h1M404 215h1M429 215h1M442 215h1M480 215h1M14 216h1M52 216h1M65 216h1M89 216h1M405 216h1M429 216h1M442 216h1M480 216h1M14 217h1M51 217h1M65 217h1M89 217h1M405 217h1M429 217h1M443 217h1M480 217h1M14 218h1M51 218h1M65 218h1M88 218h1M406 218h1M429 218h1M443 218h1M480 218h1M13 219h1M51 219h1M64 219h1M88 219h1M406 219h1M430 219h1M440 219h4M481 219h1M13 220h1M51 220h1M64 220h1M88 220h1M406 220h1M430 220h1M434 220h6M443 220h1M481 220h1M13 221h1M51 221h1M64 221h1M88 221h1M406 221h1M430 221h4M443 221h1M481 221h1M13 222h1M51 222h1M64 222h1M88 222h1M406 222h1M430 222h1M443 222h1M481 222h1M13 223h1M51 223h1M64 223h1M88 223h1M406 223h1M430 223h1M443 223h1M481 223h1M13 224h1M50 224h1M52 224h6M64 224h1M88 224h1M406 224h1M430 224h1M444 224h1M481 224h1M13 225h1M50 225h1M58 225h6M88 225h1M406 225h1M431 225h1M444 225h1M481 225h1M13 226h1M50 226h1M63 226h1M88 226h1M406 226h1M431 226h1M444 226h1M481 226h1M13 227h1M50 227h1M63 227h1M88 227h1M406 227h1M431 227h1M444 227h1M481 227h1M13 228h1M50 228h1M63 228h1M87 228h1M407 228h1M431 228h1M444 228h1M481 228h1M13 229h1M50 229h1M63 229h1M87 229h1M407 229h1M431 229h1M444 229h1M481 229h1M13 230h1M50 230h1M63 230h1M87 230h1M407 230h1M431 230h1M444 230h1M481 230h1M13 231h1M49 231h1M63 231h1M87 231h1M407 231h1M431 231h1M445 231h1M481 231h1M13 232h1M49 232h1M62 232h1M87 232h1M407 232h1M432 232h1M445 232h1M481 232h1M13 233h1M49 233h1M62 233h1M87 233h1M407 233h1M432 233h1M445 233h1M481 233h1M13 234h1M49 234h1M62 234h1M86 234h1M408 234h1M432 234h1M445 234h1M472 234h10M12 235h1M49 235h1M62 235h1M86 235h1M408 235h1M432 235h1M445 235h1M454 235h18M482 235h1M12 236h1M49 236h1M62 236h1M86 236h1M408 236h1M432 236h1M439 236h15M482 236h1M12 237h1M49 237h1M62 237h1M86 237h1M408 237h1M432 237h7M445 237h1M482 237h1M12 238h1M49 238h1M62 238h1M86 238h1M408 238h1M432 238h1M445 238h1M482 238h1M12 239h1M49 239h1M62 239h1M86 239h1M408 239h1M432 239h1M445 239h1M482 239h1M12 240h1M49 240h1M62 240h1M86 240h1M408 240h1M432 240h1M445 240h1M482 240h1M12 241h1M49 241h7M62 241h1M86 241h1M408 241h1M432 241h1M445 241h1M482 241h1M12 242h1M49 242h1M56 242h7M86 242h1M408 242h1M432 242h1M445 242h1M482 242h1M12 243h1M49 243h1M62 243h1M86 243h1M408 243h1M432 243h1M445 243h1M482 243h1M12 244h1M49 244h1M62 244h1M86 244h1M408 244h1M432 244h1M445 244h1M482 244h1M12 245h1M49 245h1M62 245h1M86 245h1M408 245h1M432 245h1M445 245h1M482 245h1M12 246h1M49 246h1M62 246h1M86 246h1M408 246h1M432 246h1M445 246h1M482 246h1M12 247h1M49 247h1M62 247h25M117 247h2M376 247h11M408 247h25M445 247h1M482 247h1M12 248h1M49 248h1M62 248h1M86 248h1M113 248h4M408 248h1M432 248h1M445 248h1M482 248h1M12 249h1M49 249h1M62 249h1M86 249h1M110 249h3M408 249h1M432 249h1M445 249h1M482 249h1M12 250h1M49 250h1M62 250h1M86 250h1M108 250h2M408 250h1M432 250h1M445 250h1M482 250h1M12 251h1M49 251h1M62 251h1M86 251h1M408 251h1M432 251h1M445 251h1M482 251h1M12 252h1M49 252h1M62 252h1M86 252h1M408 252h1M432 252h7M445 252h1M482 252h1M12 253h1M49 253h1M62 253h1M86 253h1M408 253h1M432 253h1M439 253h7M482 253h1M12 254h1M49 254h1M62 254h1M86 254h1M408 254h1M432 254h1M445 254h1M482 254h1M12 255h1M49 255h1M62 255h1M86 255h1M408 255h1M432 255h1M445 255h1M482 255h1M12 256h1M49 256h1M62 256h1M86 256h1M408 256h1M432 256h1M445 256h1M482 256h1M12 257h1M49 257h1M56 257h7M86 257h1M408 257h1M432 257h1M445 257h1M482 257h1M12 258h1M41 258h15M62 258h1M86 258h1M408 258h1M432 258h1M445 258h1M482 258h1M13 259h1M23 259h18M49 259h1M62 259h1M86 259h1M408 259h1M432 259h1M445 259h1M481 259h1M13 260h10M49 260h1M62 260h1M86 260h1M408 260h1M432 260h1M445 260h1M481 260h1M13 261h1M49 261h1M62 261h1M87 261h1M407 261h1M432 261h1M445 261h1M481 261h1M13 262h1M49 262h1M62 262h1M87 262h1M407 262h1M432 262h1M445 262h1M481 262h1M13 263h1M49 263h1M63 263h1M87 263h1M407 263h1M431 263h1M445 263h1M481 263h1M13 264h1M50 264h1M63 264h1M87 264h1M407 264h1M431 264h1M444 264h1M481 264h1M13 265h1M50 265h1M63 265h1M87 265h1M407 265h1M431 265h1M444 265h1M481 265h1M13 266h1M50 266h1M63 266h1M88 266h1M406 266h1M431 266h1M444 266h1M481 266h1M13 267h1M50 267h1M63 267h1M88 267h1M406 267h1M431 267h1M444 267h1M481 267h1M13 268h1M50 268h1M63 268h1M88 268h1M406 268h1M431 268h1M444 268h1M481 268h1M13 269h1M50 269h1M64 269h1M88 269h1M406 269h1M430 269h7M444 269h1M481 269h1M13 270h1M50 270h1M64 270h1M88 270h1M406 270h1M430 270h1M437 270h6M444 270h1M481 270h1M13 271h1M51 271h1M64 271h1M88 271h1M406 271h1M430 271h1M443 271h1M481 271h1M13 272h1M51 272h1M64 272h1M88 272h1M406 272h1M430 272h1M443 272h1M481 272h1M13 273h1M51 273h1M61 273h4M88 273h1M406 273h1M430 273h1M443 273h1M481 273h1M13 274h1M51 274h1M55 274h6M64 274h1M88 274h1M406 274h1M430 274h1M443 274h1M481 274h1M14 275h1M51 275h4M64 275h1M88 275h1M406 275h1M430 275h1M443 275h1M480 275h1M14 276h1M51 276h1M65 276h1M88 276h1M406 276h1M429 276h1M443 276h1M480 276h1M14 277h1M51 277h1M65 277h1M89 277h1M405 277h1M429 277h1M443 277h1M480 277h1M14 278h1M52 278h1M65 278h1M89 278h1M405 278h1M429 278h1M442 278h1M480 278h1M14 279h1M52 279h1M65 279h1M90 279h1M404 279h1M429 279h1M442 279h1M480 279h1M14 280h1M52 280h1M65 280h1M90 280h1M404 280h1M429 280h1M442 280h1M480 280h1M15 281h1M52 281h1M65 281h1M90 281h1M404 281h1M429 281h1M442 281h1M479 281h1M15 282h1M52 282h1M66 282h1M90 282h1M404 282h1M428 282h1M442 282h1M479 282h1M15 283h1M52 283h1M66 283h1M91 283h1M403 283h1M428 283h1M442 283h1M479 283h1M15 284h1M52 284h1M66 284h1M91 284h1M403 284h1M428 284h1M442 284h1M479 284h1M16 285h1M53 285h1M66 285h1M91 285h1M403 285h1M428 285h4M441 285h1M478 285h1M16 286h1M53 286h1M66 286h1M91 286h1M403 286h1M428 286h1M432 286h6M441 286h1M478 286h1M16 287h1M53 287h1M67 287h1M91 287h1M403 287h1M427 287h1M438 287h4M478 287h1M16 288h1M53 288h1M67 288h1M91 288h1M403 288h1M427 288h1M441 288h1M478 288h1M16 289h1M53 289h1M65 289h3M92 289h1M402 289h1M427 289h1M441 289h1M478 289h1M16 290h1M54 290h1M61 290h4M68 290h1M92 290h1M402 290h1M426 290h1M440 290h1M478 290h1M17 291h1M54 291h1M57 291h4M68 291h1M92 291h1M402 291h1M426 291h1M440 291h1M477 291h1M17 292h1M54 292h3M68 292h1M92 292h1M402 292h1M426 292h1M440 292h1M477 292h1M17 293h1M54 293h1M68 293h1M93 293h1M401 293h1M426 293h1M440 293h1M477 293h1M17 294h1M55 294h1M68 294h1M93 294h1M401 294h1M426 294h1M439 294h1M477 294h1M17 295h1M55 295h1M69 295h1M94 295h1M400 295h1M425 295h1M439 295h1M477 295h1M17 296h1M55 296h1M69 296h1M94 296h1M400 296h1M425 296h1M439 296h1M477 296h1M18 297h1M56 297h1M69 297h1M94 297h1M400 297h1M425 297h1M438 297h1M476 297h1M18 298h1M56 298h1M69 298h1M95 298h1M399 298h1M425 298h1M438 298h1M476 298h1M18 299h1M56 299h1M69 299h1M95 299h1M399 299h1M425 299h1M438 299h1M476 299h1M18 300h1M57 300h1M70 300h1M95 300h1M399 300h1M424 300h3M437 300h1M476 300h1M19 301h1M57 301h1M70 301h1M96 301h1M398 301h1M424 301h1M427 301h2M437 301h1M475 301h1M19 302h1M57 302h1M70 302h1M96 302h1M398 302h1M424 302h1M429 302h3M437 302h1M475 302h1M19 303h1M58 303h1M71 303h1M96 303h1M398 303h1M423 303h1M432 303h2M436 303h1M475 303h1M19 304h1M58 304h1M71 304h1M97 304h1M397 304h1M423 304h1M434 304h3M475 304h1M20 305h1M58 305h1M70 305h2M97 305h1M397 305h1M423 305h1M436 305h1M474 305h1M20 306h1M58 306h1M66 306h4M72 306h1M98 306h1M396 306h1M422 306h1M436 306h1M474 306h1M20 307h1M59 307h1M62 307h4M72 307h1M98 307h1M396 307h1M422 307h1M435 307h1M474 307h1M20 308h1M59 308h3M72 308h1M98 308h1M396 308h1M422 308h1M435 308h1M474 308h1M21 309h1M59 309h1M73 309h1M99 309h1M395 309h1M421 309h1M435 309h1M473 309h1M21 310h1M60 310h1M73 310h1M99 310h1M395 310h1M421 310h1M434 310h1M473 310h1M21 311h1M60 311h1M74 311h1M100 311h1M394 311h1M420 311h1M434 311h1M473 311h1M21 312h1M60 312h1M74 312h1M100 312h1M394 312h2M420 312h1M434 312h1M473 312h1M22 313h1M61 313h1M75 313h1M100 313h1M394 313h1M396 313h2M419 313h1M433 313h1M472 313h1M22 314h1M61 314h1M75 314h1M101 314h1M393 314h1M398 314h3M419 314h1M433 314h1M472 314h1M23 315h1M61 315h1M76 315h1M101 315h1M393 315h1M401 315h2M418 315h1M433 315h1M471 315h1M23 316h1M62 316h1M76 316h1M102 316h1M392 316h1M403 316h2M418 316h3M432 316h1M471 316h1M23 317h1M62 317h1M76 317h1M102 317h1M392 317h1M405 317h3M418 317h1M421 317h3M432 317h1M471 317h1M24 318h1M62 318h1M77 318h1M103 318h1M391 318h1M408 318h2M417 318h1M424 318h2M432 318h1M470 318h1M24 319h1M62 319h1M77 319h1M103 319h1M141 319h1M391 319h1M410 319h3M417 319h1M426 319h3M432 319h1M470 319h1M24 320h1M63 320h1M75 320h3M104 320h1M139 320h2M390 320h1M413 320h2M417 320h1M429 320h3M470 320h1M25 321h1M63 321h1M73 321h2M78 321h1M104 321h1M138 321h1M390 321h1M415 321h2M431 321h1M469 321h1M25 322h1M64 322h1M70 322h3M78 322h1M105 322h1M137 322h1M389 322h1M416 322h1M430 322h1M469 322h1M25 323h1M64 323h1M68 323h2M79 323h1M106 323h1M135 323h2M388 323h1M415 323h1M430 323h1M469 323h1M25 324h1M65 324h3M79 324h1M106 324h1M134 324h1M388 324h1M415 324h1M429 324h1M469 324h1M26 325h1M65 325h1M80 325h1M107 325h1M133 325h1M387 325h1M414 325h1M429 325h1M468 325h1M26 326h1M66 326h1M80 326h1M107 326h1M387 326h1M414 326h1M428 326h1M468 326h1M26 327h1M66 327h1M81 327h1M108 327h1M347 327h1M386 327h1M413 327h1M428 327h1M468 327h1M26 328h1M66 328h1M81 328h1M109 328h1M348 328h1M385 328h1M413 328h1M428 328h1M468 328h1M27 329h1M67 329h1M82 329h1M109 329h1M349 329h2M385 329h1M412 329h1M427 329h1M467 329h1M27 330h1M67 330h1M82 330h1M110 330h1M351 330h1M384 330h1M412 330h2M427 330h1M467 330h1M28 331h1M68 331h1M83 331h1M110 331h1M352 331h1M384 331h1M411 331h1M414 331h2M426 331h1M466 331h1M28 332h1M68 332h1M83 332h1M111 332h1M353 332h2M383 332h1M411 332h1M416 332h2M426 332h1M466 332h1M28 333h1M69 333h1M84 333h1M109 333h2M112 333h1M355 333h1M382 333h1M410 333h1M418 333h2M425 333h1M466 333h1M29 334h1M69 334h1M84 334h1M108 334h1M112 334h1M382 334h1M410 334h1M420 334h2M425 334h1M465 334h1M29 335h1M70 335h1M83 335h1M85 335h1M106 335h2M113 335h1M381 335h1M409 335h1M422 335h3M465 335h1M29 336h1M70 336h1M81 336h2M85 336h1M105 336h1M113 336h1M381 336h1M409 336h1M424 336h1M465 336h1M30 337h1M71 337h1M79 337h2M86 337h1M103 337h2M114 337h1M380 337h1M408 337h1M423 337h1M425 337h2M464 337h1M30 338h1M71 338h1M77 338h2M86 338h1M101 338h2M115 338h1M379 338h1M408 338h1M423 338h1M427 338h2M464 338h1M31 339h1M72 339h1M75 339h2M87 339h1M100 339h1M116 339h1M378 339h1M407 339h1M422 339h1M429 339h2M463 339h1M31 340h1M72 340h1M74 340h1M88 340h1M98 340h2M116 340h1M335 340h1M378 340h1M406 340h1M422 340h1M431 340h2M463 340h1M32 341h1M73 341h1M88 341h1M97 341h1M117 341h1M336 341h1M377 341h1M406 341h1M421 341h1M433 341h2M462 341h1M32 342h1M73 342h1M89 342h1M95 342h2M118 342h1M337 342h1M376 342h1M405 342h1M421 342h1M435 342h2M462 342h1M33 343h1M74 343h1M89 343h1M94 343h1M118 343h1M338 343h1M376 343h1M405 343h1M420 343h1M437 343h2M461 343h1M33 344h1M75 344h1M90 344h1M92 344h2M119 344h1M339 344h1M375 344h1M404 344h1M419 344h1M439 344h2M461 344h1M34 345h1M75 345h1M90 345h2M119 345h1M340 345h1M375 345h1M404 345h2M419 345h1M441 345h2M460 345h1M34 346h1M76 346h1M91 346h1M120 346h1M166 346h1M341 346h1M374 346h1M403 346h1M406 346h2M418 346h1M443 346h2M460 346h1M35 347h1M77 347h1M92 347h1M121 347h1M165 347h1M342 347h1M373 347h1M402 347h1M408 347h2M417 347h1M445 347h2M459 347h1M35 348h1M77 348h1M92 348h1M122 348h1M164 348h1M372 348h1M402 348h1M410 348h2M417 348h1M447 348h2M459 348h1M36 349h1M78 349h1M92 349h2M123 349h1M163 349h1M371 349h1M401 349h1M412 349h2M416 349h1M449 349h2M458 349h1M36 350h1M78 350h1M90 350h2M94 350h1M124 350h1M162 350h1M370 350h1M400 350h1M414 350h1M416 350h1M451 350h2M458 350h1M37 351h1M79 351h1M88 351h2M95 351h1M125 351h1M162 351h1M369 351h1M399 351h1M415 351h1M453 351h2M457 351h1M37 352h1M79 352h1M87 352h1M95 352h1M125 352h1M161 352h1M369 352h1M399 352h1M415 352h1M455 352h3M38 353h1M80 353h1M85 353h2M96 353h1M126 353h1M160 353h1M368 353h1M398 353h1M414 353h1M456 353h1M38 354h1M81 354h1M83 354h2M96 354h1M126 354h1M368 354h1M398 354h1M413 354h1M456 354h1M39 355h1M81 355h2M97 355h1M127 355h1M367 355h1M397 355h1M413 355h1M455 355h1M39 356h1M79 356h2M82 356h1M97 356h1M128 356h1M366 356h1M397 356h1M412 356h1M455 356h1M40 357h1M78 357h1M83 357h1M98 357h1M129 357h1M365 357h1M396 357h1M411 357h1M454 357h1M41 358h1M76 358h2M84 358h1M99 358h1M130 358h1M364 358h1M395 358h2M410 358h1M453 358h1M41 359h1M75 359h1M84 359h1M99 359h1M131 359h1M363 359h1M395 359h1M397 359h1M410 359h1M453 359h1M42 360h1M73 360h2M85 360h1M100 360h1M132 360h1M362 360h1M394 360h1M398 360h2M409 360h1M452 360h1M42 361h1M72 361h1M86 361h1M101 361h1M133 361h1M188 361h1M361 361h1M393 361h1M400 361h1M408 361h1M452 361h1M43 362h1M70 362h2M86 362h1M101 362h2M134 362h1M188 362h1M360 362h1M392 362h1M401 362h1M408 362h1M451 362h1M43 363h1M69 363h1M87 363h1M100 363h1M103 363h1M135 363h1M187 363h1M359 363h1M391 363h1M402 363h2M407 363h1M451 363h1M44 364h1M67 364h2M88 364h1M98 364h2M103 364h1M136 364h1M187 364h1M358 364h1M391 364h1M404 364h1M406 364h1M450 364h1M45 365h1M66 365h1M88 365h1M97 365h1M104 365h1M137 365h1M186 365h1M357 365h1M390 365h1M405 365h2M449 365h1M45 366h1M64 366h2M89 366h1M96 366h1M105 366h1M138 366h1M186 366h1M356 366h1M389 366h1M405 366h1M449 366h1M46 367h1M63 367h1M90 367h1M94 367h2M106 367h1M139 367h1M185 367h1M355 367h1M388 367h1M404 367h1M448 367h1M46 368h1M61 368h2M90 368h1M93 368h1M107 368h1M140 368h2M185 368h1M353 368h2M387 368h1M404 368h1M448 368h1M47 369h1M60 369h1M91 369h2M108 369h1M142 369h2M184 369h1M351 369h2M386 369h1M403 369h1M447 369h1M47 370h1M58 370h2M92 370h1M109 370h1M144 370h1M184 370h1M210 370h1M284 370h1M350 370h1M352 370h1M385 370h1M402 370h1M447 370h1M48 371h1M57 371h1M93 371h1M110 371h1M145 371h1M210 371h1M285 371h1M349 371h1M353 371h1M384 371h2M401 371h1M446 371h1M49 372h1M55 372h2M93 372h1M111 372h1M146 372h1M209 372h1M285 372h1M348 372h1M354 372h1M383 372h1M386 372h1M401 372h1M445 372h1M49 373h1M54 373h1M94 373h1M112 373h1M147 373h1M209 373h1M270 373h1M286 373h1M347 373h1M355 373h1M382 373h1M387 373h2M400 373h1M445 373h1M50 374h1M52 374h2M95 374h1M112 374h2M148 374h1M209 374h1M270 374h1M286 374h1M346 374h1M355 374h1M381 374h1M389 374h1M399 374h1M444 374h1M50 375h2M96 375h1M111 375h1M114 375h1M149 375h2M208 375h1M270 375h1M287 375h1M344 375h2M356 375h1M380 375h1M390 375h1M398 375h1M444 375h1M51 376h1M97 376h1M110 376h1M115 376h1M151 376h2M208 376h1M271 376h1M287 376h1M342 376h2M357 376h1M379 376h1M391 376h2M397 376h1M443 376h1M51 377h1M98 377h1M109 377h1M116 377h1M153 377h1M208 377h1M271 377h1M288 377h1M341 377h1M358 377h1M378 377h1M393 377h1M396 377h1M443 377h1M52 378h1M99 378h1M108 378h1M117 378h1M154 378h1M208 378h1M271 378h1M288 378h1M339 378h2M359 378h1M377 378h1M394 378h2M442 378h1M53 379h1M100 379h1M107 379h1M118 379h1M155 379h2M207 379h1M271 379h1M289 379h1M338 379h1M360 379h1M376 379h1M394 379h1M441 379h1M53 380h1M101 380h1M106 380h1M119 380h1M157 380h1M207 380h1M271 380h1M337 380h1M361 380h1M375 380h1M393 380h1M441 380h1M54 381h1M102 381h1M105 381h1M120 381h1M158 381h2M272 381h1M335 381h2M362 381h1M374 381h1M392 381h1M440 381h1M55 382h1M103 382h2M121 382h1M160 382h2M272 382h1M333 382h2M363 382h1M373 382h2M391 382h1M439 382h1M56 383h1M104 383h1M122 383h1M162 383h1M272 383h1M332 383h1M363 383h1M372 383h1M375 383h1M390 383h1M438 383h1M56 384h1M105 384h1M123 384h1M163 384h2M330 384h2M364 384h1M371 384h1M376 384h1M389 384h1M438 384h1M57 385h1M106 385h1M123 385h2M165 385h2M328 385h2M365 385h1M370 385h1M377 385h1M388 385h1M437 385h1M58 386h1M107 386h1M122 386h1M125 386h1M167 386h1M327 386h1M366 386h1M369 386h1M378 386h1M387 386h1M436 386h1M59 387h1M108 387h1M121 387h1M126 387h1M168 387h2M325 387h2M367 387h2M379 387h1M386 387h1M435 387h1M60 388h1M109 388h1M121 388h1M127 388h1M170 388h2M323 388h2M367 388h1M380 388h1M385 388h1M434 388h1M60 389h1M110 389h1M120 389h1M128 389h1M172 389h1M322 389h1M366 389h1M381 389h1M384 389h1M434 389h1M61 390h1M111 390h1M119 390h1M129 390h1M173 390h2M320 390h2M365 390h1M382 390h2M433 390h1M62 391h1M112 391h1M118 391h1M130 391h2M175 391h2M318 391h2M363 391h2M382 391h1M432 391h1M63 392h1M113 392h1M118 392h1M132 392h1M177 392h2M316 392h2M362 392h1M381 392h1M431 392h1M63 393h1M114 393h1M117 393h1M133 393h1M179 393h2M314 393h2M361 393h2M380 393h1M431 393h1M64 394h1M115 394h2M134 394h1M181 394h3M311 394h3M360 394h1M363 394h1M379 394h1M430 394h1M65 395h1M116 395h1M135 395h2M184 395h2M309 395h2M358 395h2M364 395h1M378 395h1M429 395h1M66 396h1M117 396h1M136 396h2M184 396h1M186 396h3M306 396h3M357 396h1M364 396h1M377 396h1M428 396h1M66 397h1M118 397h1M135 397h1M138 397h1M183 397h1M189 397h2M304 397h2M355 397h2M365 397h1M376 397h1M428 397h1M67 398h1M119 398h1M134 398h1M139 398h2M183 398h1M191 398h3M301 398h3M353 398h2M366 398h1M375 398h1M427 398h1M68 399h1M120 399h1M134 399h1M141 399h2M182 399h1M194 399h3M298 399h3M351 399h2M367 399h1M374 399h1M426 399h1M69 400h1M121 400h1M133 400h1M143 400h2M182 400h1M197 400h3M295 400h3M350 400h1M367 400h1M373 400h1M425 400h1M70 401h1M122 401h2M132 401h1M145 401h1M181 401h1M200 401h2M293 401h2M349 401h1M368 401h1M371 401h2M424 401h1M70 402h1M124 402h1M131 402h1M146 402h2M181 402h1M202 402h4M289 402h4M347 402h3M369 402h2M424 402h1M71 403h1M125 403h1M131 403h1M148 403h1M180 403h1M206 403h5M283 403h6M346 403h1M350 403h1M369 403h1M423 403h1M72 404h1M126 404h2M130 404h1M149 404h1M180 404h1M211 404h5M279 404h4M344 404h2M350 404h1M367 404h2M422 404h1M73 405h1M128 405h2M149 405h3M179 405h1M216 405h2M276 405h3M342 405h2M351 405h1M366 405h1M421 405h1M74 406h1M129 406h2M148 406h1M152 406h2M179 406h1M218 406h10M266 406h11M340 406h2M351 406h1M364 406h2M420 406h1M75 407h1M131 407h1M148 407h1M154 407h2M178 407h1M228 407h6M261 407h5M276 407h1M339 407h1M352 407h1M363 407h1M419 407h1M76 408h1M132 408h2M147 408h1M156 408h2M178 408h1M234 408h27M277 408h1M337 408h2M353 408h1M361 408h2M418 408h1M77 409h1M134 409h1M147 409h1M158 409h2M177 409h1M277 409h1M335 409h2M353 409h1M360 409h1M417 409h1M78 410h1M135 410h2M146 410h1M160 410h1M177 410h1M277 410h1M333 410h2M354 410h1M358 410h2M416 410h1M79 411h1M137 411h1M146 411h1M161 411h2M176 411h1M277 411h1M331 411h2M335 411h1M354 411h1M357 411h1M415 411h1M80 412h1M138 412h1M145 412h1M163 412h2M176 412h1M278 412h1M329 412h2M336 412h1M355 412h2M414 412h1M81 413h1M139 413h2M145 413h1M164 413h3M175 413h1M278 413h1M327 413h2M336 413h1M354 413h2M413 413h1M82 414h1M141 414h1M144 414h1M163 414h1M167 414h2M175 414h1M278 414h1M325 414h2M337 414h1M353 414h1M356 414h1M412 414h1M83 415h1M142 415h1M163 415h1M169 415h2M174 415h1M278 415h1M323 415h2M337 415h1M351 415h2M356 415h1M411 415h1M84 416h1M143 416h2M162 416h1M171 416h4M278 416h1M321 416h2M338 416h1M349 416h2M357 416h1M410 416h1M85 417h1M145 417h2M162 417h1M174 417h3M279 417h1M318 417h3M338 417h1M347 417h2M358 417h1M409 417h1M86 418h1M147 418h2M161 418h1M177 418h2M279 418h1M315 418h3M320 418h1M339 418h1M346 418h1M358 418h1M408 418h1M87 419h1M149 419h2M161 419h1M178 419h3M279 419h1M313 419h2M320 419h1M339 419h1M344 419h2M359 419h1M407 419h1M88 420h1M151 420h1M160 420h1M178 420h1M181 420h2M279 420h1M311 420h2M321 420h1M340 420h1M343 420h1M360 420h1M406 420h1M89 421h1M152 421h2M160 421h1M177 421h1M183 421h3M279 421h1M309 421h2M321 421h1M341 421h2M360 421h1M405 421h1M90 422h1M154 422h1M159 422h1M177 422h1M186 422h3M280 422h1M306 422h3M322 422h1M339 422h2M361 422h1M404 422h1M91 423h1M155 423h2M159 423h1M177 423h1M189 423h3M280 423h1M303 423h3M322 423h1M337 423h2M362 423h1M403 423h1M92 424h1M157 424h2M176 424h1M192 424h3M280 424h1M300 424h3M305 424h1M322 424h1M335 424h2M362 424h1M401 424h2M93 425h2M157 425h1M159 425h3M176 425h1M194 425h6M280 425h1M295 425h5M306 425h1M323 425h1M333 425h2M363 425h1M400 425h1M95 426h1M157 426h1M162 426h2M175 426h1M194 426h1M200 426h5M281 426h1M290 426h5M306 426h1M323 426h1M331 426h2M364 426h1M399 426h1M96 427h1M156 427h1M164 427h2M175 427h1M193 427h1M205 427h3M281 427h1M287 427h3M306 427h1M324 427h1M329 427h2M364 427h1M398 427h1M97 428h2M156 428h1M166 428h2M175 428h1M193 428h1M208 428h4M281 428h6M289 428h1M306 428h1M324 428h1M326 428h3M365 428h1M396 428h2M99 429h1M155 429h1M168 429h2M174 429h1M192 429h1M209 429h1M212 429h7M276 429h6M289 429h1M307 429h1M324 429h2M366 429h1M395 429h1M100 430h1M155 430h1M170 430h2M174 430h1M192 430h1M209 430h1M219 430h6M269 430h7M290 430h1M307 430h1M322 430h2M366 430h1M394 430h1M101 431h2M154 431h1M172 431h3M192 431h1M209 431h1M225 431h7M263 431h6M273 431h1M290 431h1M307 431h1M320 431h2M367 431h1M392 431h2M103 432h1M154 432h1M175 432h4M191 432h1M208 432h1M225 432h1M232 432h31M273 432h1M290 432h1M307 432h1M316 432h4M368 432h1M391 432h1M104 433h1M153 433h1M179 433h3M191 433h1M208 433h1M225 433h1M242 433h1M257 433h1M273 433h1M290 433h1M308 433h1M313 433h3M368 433h1M390 433h1M105 434h1M153 434h1M182 434h3M190 434h1M208 434h1M225 434h1M242 434h1M257 434h1M274 434h1M291 434h1M308 434h1M310 434h3M369 434h1M388 434h2M106 435h2M152 435h1M185 435h3M190 435h1M208 435h1M225 435h1M242 435h1M257 435h1M274 435h1M291 435h1M307 435h3M370 435h1M387 435h1M108 436h1M152 436h1M188 436h4M208 436h1M225 436h1M242 436h1M257 436h1M274 436h1M291 436h1M303 436h4M370 436h1M386 436h1M109 437h1M151 437h1M192 437h3M208 437h1M224 437h1M242 437h1M257 437h1M274 437h1M291 437h1M300 437h3M371 437h1M385 437h1M110 438h2M151 438h1M195 438h3M207 438h1M224 438h1M242 438h1M257 438h1M274 438h1M292 438h1M297 438h3M372 438h1M383 438h2M112 439h1M150 439h1M198 439h3M207 439h1M224 439h1M241 439h1M258 439h1M274 439h1M292 439h1M294 439h3M372 439h1M382 439h1M113 440h1M150 440h1M201 440h4M207 440h1M224 440h1M241 440h1M258 440h1M275 440h1M290 440h4M373 440h1M381 440h1M114 441h2M149 441h1M205 441h5M224 441h1M241 441h1M258 441h1M275 441h1M285 441h5M374 441h1M379 441h2M116 442h1M149 442h1M210 442h7M224 442h1M241 442h1M258 442h1M275 442h1M278 442h7M374 442h1M378 442h1M117 443h2M148 443h1M217 443h7M241 443h1M258 443h1M271 443h7M375 443h3M119 444h2M148 444h1M224 444h7M241 444h1M258 444h1M264 444h7M374 444h2M121 445h2M147 445h1M231 445h33M372 445h2M123 446h1M147 446h1M258 446h1M371 446h1M124 447h2M146 447h1M258 447h1M369 447h2M126 448h2M146 448h1M258 448h1M367 448h2M128 449h2M145 449h1M258 449h1M365 449h2M130 450h1M145 450h1M258 450h1M364 450h1M131 451h2M144 451h1M258 451h1M362 451h2M133 452h2M144 452h1M258 452h1M360 452h2M135 453h2M143 453h1M258 453h1M358 453h2M137 454h1M143 454h1M259 454h1M357 454h1M138 455h2M142 455h1M259 455h1M355 455h2M140 456h3M259 456h1M353 456h2M142 457h2M259 457h1M351 457h2M144 458h1M259 458h1M349 458h2M145 459h2M259 459h1M347 459h2M147 460h2M259 460h1M345 460h2M149 461h2M259 461h1M343 461h2M151 462h3M259 462h1M341 462h2M154 463h2M259 463h1M339 463h2M156 464h2M259 464h1M337 464h2M158 465h3M259 465h1M334 465h3M161 466h2M259 466h1M331 466h3M163 467h3M259 467h1M329 467h2M166 468h3M259 468h1M325 468h4M169 469h4M259 469h1M321 469h4M173 470h4M259 470h1M318 470h3M177 471h2M259 471h1M315 471h3M179 472h3M260 472h1M313 472h2M182 473h3M260 473h1M309 473h4M185 474h4M260 474h1M305 474h4M189 475h4M260 475h1M301 475h4M193 476h4M260 476h1M297 476h4M197 477h6M260 477h1M291 477h6M203 478h6M260 478h1M285 478h6M209 479h4M260 479h1M281 479h4M213 480h6M260 480h1M275 480h6M219 481h16M259 481h16M235 482h24"/>
<path stroke="#ffff00" d="M283 27h1M287 27h1M291 27h1M284 28h1M286 28h1M288 28h1M290 28h1M292 28h1M285 29h1M289 29h1M293 29h1M297 29h1M206 30h3M285 30h1M289 30h1M293 30h1M296 30h2M205 31h1M209 31h1M285 31h1M289 31h1M293 31h1M295 31h1M297 31h1M205 32h1M209 32h1M285 32h1M289 32h1M293 32h2M297 32h1M205 33h1M209 33h1M285 33h1M289 33h1M293 33h1M297 33h1M206 34h3M285 34h1M289 34h1M293 34h1M297 34h1M207 35h1M285 35h1M289 35h1M293 35h1M297 35h1M205 36h5M285 36h1M289 36h1M293 36h1M297 36h1M207 37h1M285 37h1M289 37h1M293 37h1M297 37h1M207 38h1M285 38h1M289 38h1M293 38h1M297 38h1M285 39h1M289 39h1M293 39h1M297 39h1M285 40h1M289 40h1M294 40h1M296 40h1M285 41h1M289 41h1M295 41h1M294 42h1M296 42h1M293 43h1M297 43h1M192 78h1M190 79h5M192 80h1M192 81h1M194 81h2M192 82h2M196 82h1M192 83h1M196 83h1M192 84h1M195 84h1M192 85h1M195 85h1M196 86h1M224 124h1M223 125h3M224 126h1M641 126h1M644 126h1M646 126h2M640 127h2M644 127h2M648 127h1M641 128h1M643 128h1M645 128h1M648 128h1M641 129h1M643 129h1M646 129h2M641 130h1M643 130h1M647 130h1M221 131h1M223 131h1M642 131h1M648 131h1M219 132h1M642 132h1M648 132h1M642 133h1M648 133h1M647 134h1M641 166h1M648 166h1M642 167h6M643 168h1M646 168h1M643 169h1M646 169h1M643 170h1M646 170h1M643 171h1M646 171h1M643 172h1M646 172h1M642 173h6M641 174h1M648 174h1M380 177h1M380 178h1M376 179h9M380 180h1M380 181h1M380 182h1M380 183h1M384 183h3M380 184h1M383 184h1M387 184h1M380 185h3M388 185h1M380 186h1M388 186h1M380 187h1M388 187h1M380 188h1M387 188h1M380 189h1M386 189h1M380 190h1M386 190h1M380 191h1M386 191h1M387 192h1M388 193h1M359 194h1M358 195h3M359 196h1M643 208h3M642 209h1M646 209h1M642 210h1M646 210h1M640 211h4M645 211h4M640 213h9M418 219h3M417 220h1M421 220h1M417 221h1M421 221h1M417 222h1M421 222h1M418 223h3M419 224h1M417 225h5M419 226h1M419 227h1M128 244h1M128 246h1M643 276h3M642 277h1M646 277h1M642 278h1M646 278h1M642 279h1M646 279h1M643 280h3M644 281h1M642 282h5M33 283h1M644 283h1M31 284h5M644 284h1M33 285h1M33 286h1M35 286h2M33 287h2M37 287h1M33 288h1M37 288h1M33 289h1M36 289h1M33 290h1M36 290h1M37 291h1M35 306h1M41 306h1M45 306h3M643 306h1M35 307h1M41 307h2M44 307h1M48 307h1M641 307h5M33 308h3M41 308h1M43 308h1M49 308h1M643 308h1M35 309h1M40 309h1M42 309h1M49 309h1M643 309h1M645 309h2M35 310h1M39 310h1M43 310h1M49 310h1M643 310h2M647 310h1M35 311h1M39 311h1M44 311h1M48 311h1M643 311h1M647 311h1M35 312h1M39 312h1M45 312h3M643 312h1M646 312h1M35 313h1M39 313h1M46 313h1M643 313h1M646 313h1M35 314h1M39 314h1M47 314h1M647 314h1M36 315h1M38 315h1M48 315h1M37 316h1M49 316h1M37 317h1M49 317h1M37 318h1M49 318h1M37 319h1M49 319h1M37 320h1M49 320h1M48 321h1M340 321h1M47 322h1M344 323h1M343 324h3M336 325h1M344 325h1M333 329h1M361 332h5M329 333h1M360 333h1M366 333h1M359 334h1M367 334h1M359 335h1M367 335h1M359 336h1M367 336h1M359 337h1M367 337h1M359 338h1M367 338h1M360 339h1M366 339h1M361 340h5M363 341h1M363 342h1M363 343h1M359 344h9M363 345h1M363 346h1M363 347h1M363 348h1M115 356h3M114 357h1M118 357h1M114 358h1M118 358h1M114 359h1M118 359h1M115 360h3M116 361h1M114 362h5M277 362h1M116 363h1M273 363h1M116 364h1M269 364h1M403 383h1M415 383h1M404 384h1M414 384h1M404 385h1M414 385h1M405 386h2M412 386h2M407 387h5M406 388h1M412 388h1M405 389h1M413 389h1M404 390h1M414 390h1M403 391h1M415 391h1M403 392h1M415 392h1M403 393h1M415 393h1M403 394h1M415 394h1M403 395h1M415 395h1M404 396h1M414 396h1M405 397h1M413 397h1M406 398h1M412 398h1M407 399h5M387 407h3M386 408h1M390 408h1M386 409h1M390 409h1M386 410h1M390 410h1M387 411h3M388 412h1M386 413h5M388 414h1M388 415h1"/>
<path stroke="#00ff00" d="M178 37h5M177 38h1M183 38h1M316 38h1M320 38h1M176 39h1M184 39h1M317 39h3M176 40h1M184 40h1M316 40h1M320 40h1M176 41h1M184 41h1M316 41h1M320 41h1M177 42h1M183 42h1M316 42h1M320 42h1M172 43h7M182 43h7M317 43h3M318 44h1M316 45h5M318 46h1M172 47h17M118 125h1M124 125h1M119 126h1M123 126h1M119 127h1M121 127h1M123 127h1M119 128h5M119 129h1M121 129h1M123 129h1M118 130h1M121 130h1M124 130h1M225 130h1M265 130h1M120 131h3M265 131h1M120 132h1M122 132h1M266 132h1M121 133h1M266 133h1M223 134h1M267 134h1M267 135h1M267 136h1M640 136h1M648 136h1M268 137h1M641 137h1M647 137h1M222 138h1M268 138h1M642 138h1M646 138h1M269 139h1M642 139h1M646 139h1M269 140h1M640 140h9M269 141h1M642 141h1M646 141h1M220 142h1M270 142h1M642 142h1M646 142h1M270 143h1M641 143h1M647 143h1M270 144h1M640 144h1M648 144h1M271 145h1M218 146h1M271 146h1M272 147h1M272 148h1M272 149h1M217 150h1M273 150h1M273 151h1M274 152h1M274 153h1M215 154h1M274 154h1M275 155h1M275 156h1M276 157h1M213 158h1M276 158h1M276 159h1M277 160h1M277 161h1M212 162h1M278 162h1M278 163h1M278 164h1M279 165h1M210 166h1M279 166h1M280 167h1M280 168h1M280 169h1M208 170h1M281 170h1M281 171h1M281 172h1M282 173h1M207 174h1M282 174h1M283 175h1M283 176h1M641 176h1M648 176h1M283 177h1M642 177h6M205 178h1M284 178h1M643 178h1M646 178h1M284 179h1M643 179h1M646 179h1M285 180h1M643 180h1M646 180h1M285 181h1M643 181h1M646 181h1M204 182h1M285 182h1M643 182h1M646 182h1M286 183h1M642 183h6M286 184h1M641 184h1M648 184h1M287 185h1M202 186h1M287 186h1M287 187h1M288 188h1M288 189h1M200 190h1M289 190h1M289 191h1M289 192h1M290 193h1M199 194h1M290 194h1M291 195h1M291 196h1M291 197h1M197 198h1M292 198h1M292 199h1M292 200h1M293 201h1M195 202h1M293 202h1M294 203h1M294 204h1M294 205h1M194 206h1M295 206h1M295 207h1M296 208h1M296 209h1M192 210h1M296 210h1M297 211h1M297 212h1M298 213h1M190 214h1M298 214h1M298 215h1M299 216h1M640 216h1M642 216h1M644 216h1M299 217h1M641 217h1M643 217h1M645 217h1M189 218h1M300 218h1M641 218h1M643 218h1M645 218h1M300 219h1M641 219h1M643 219h1M645 219h1M300 220h1M641 220h1M643 220h1M645 220h1M301 221h1M641 221h1M643 221h1M645 221h1M187 222h1M301 222h1M641 222h1M643 222h1M645 222h1M648 222h1M302 223h1M641 223h1M643 223h1M645 223h1M648 223h1M302 224h1M646 224h2M302 225h1M185 226h1M303 226h1M303 227h1M303 228h1M304 229h1M184 230h1M304 230h1M305 231h1M305 232h1M305 233h1M182 234h1M306 234h1M306 235h1M307 236h1M307 237h1M180 238h1M307 238h1M308 239h1M308 240h1M309 241h1M128 242h1M179 242h1M309 242h1M309 243h1M131 244h1M310 244h1M310 245h1M134 246h1M177 246h1M311 246h1M371 246h1M311 247h1M370 247h3M137 248h1M311 248h1M365 248h1M371 248h1M312 249h1M363 249h1M140 250h1M175 250h1M312 250h1M361 250h1M313 251h1M359 251h1M143 252h1M313 252h1M313 253h1M357 253h1M146 254h1M174 254h1M314 254h1M355 254h1M314 255h1M353 255h1M149 256h1M314 256h1M351 256h1M315 257h1M349 257h1M152 258h1M172 258h1M315 258h1M316 259h1M347 259h1M155 260h1M316 260h1M345 260h1M316 261h1M343 261h1M158 262h1M170 262h1M317 262h1M341 262h1M317 263h1M161 264h1M318 264h1M339 264h1M318 265h1M337 265h1M164 266h1M169 266h1M318 266h1M335 266h1M642 266h1M646 266h1M319 267h1M333 267h1M643 267h3M167 268h1M319 268h1M331 268h1M642 268h1M646 268h1M320 269h1M642 269h1M646 269h1M167 270h1M170 270h1M320 270h1M329 270h1M642 270h1M646 270h1M320 271h1M327 271h1M643 271h3M173 272h1M321 272h1M325 272h1M644 272h1M321 273h1M323 273h1M642 273h5M166 274h1M176 274h1M322 274h1M644 274h1M321 275h2M179 276h1M319 276h1M322 276h1M317 277h1M323 277h1M164 278h1M182 278h1M315 278h1M323 278h1M313 279h1M324 279h1M185 280h1M311 281h1M162 282h1M188 282h1M309 282h1M325 282h1M307 283h1M325 283h1M453 283h1M467 283h1M191 284h1M305 284h1M325 284h1M454 284h1M466 284h1M326 285h1M455 285h11M161 286h1M194 286h1M303 286h1M326 286h1M457 286h1M463 286h1M301 287h1M327 287h1M457 287h1M463 287h1M197 288h1M299 288h1M327 288h1M457 288h1M463 288h1M297 289h1M327 289h1M457 289h1M463 289h1M159 290h1M200 290h1M328 290h1M457 290h1M463 290h1M295 291h1M328 291h1M457 291h1M463 291h1M203 292h1M293 292h1M329 292h1M457 292h1M463 292h1M291 293h1M329 293h1M457 293h1M463 293h1M157 294h1M206 294h1M289 294h1M329 294h1M457 294h1M463 294h1M287 295h1M330 295h1M457 295h1M463 295h1M209 296h1M330 296h1M410 296h1M414 296h1M457 296h1M463 296h1M285 297h1M331 297h1M411 297h3M455 297h11M156 298h1M212 298h1M283 298h1M331 298h1M410 298h1M414 298h1M454 298h1M466 298h1M281 299h1M331 299h1M410 299h1M414 299h1M453 299h1M467 299h1M215 300h1M279 300h1M332 300h1M410 300h1M414 300h1M332 301h1M411 301h3M154 302h1M218 302h1M277 302h1M333 302h1M412 302h1M275 303h1M333 303h1M410 303h5M221 304h1M273 304h1M333 304h1M412 304h1M271 305h1M334 305h1M152 306h1M224 306h1M269 306h1M334 306h1M335 307h1M227 308h1M267 308h1M335 308h1M265 309h1M335 309h1M151 310h1M230 310h1M263 310h1M336 310h1M261 311h1M336 311h1M233 312h1M336 312h1M259 313h1M337 313h1M149 314h1M236 314h1M257 314h1M337 314h1M450 314h1M454 314h1M255 315h1M338 315h1M451 315h3M239 316h1M253 316h1M338 316h1M450 316h1M454 316h1M641 316h1M647 316h1M251 317h1M338 317h1M450 317h1M454 317h1M642 317h1M646 317h1M242 318h1M339 318h1M450 318h1M454 318h1M642 318h1M644 318h1M646 318h1M249 319h1M339 319h1M451 319h3M642 319h5M245 320h1M247 320h1M340 320h1M452 320h1M642 320h1M644 320h1M646 320h1M245 321h1M450 321h5M641 321h1M644 321h1M647 321h1M243 322h1M248 322h1M452 322h1M643 322h3M643 323h1M645 323h1M241 324h1M251 324h1M644 324h1M239 325h1M237 326h1M254 326h1M235 327h1M257 327h1M233 328h1M260 329h1M231 330h1M229 331h1M263 331h1M227 332h1M266 333h1M223 335h1M269 335h1M221 336h1M219 337h1M272 337h1M217 338h1M215 340h1M213 341h1M278 341h1M211 342h1M209 343h1M281 343h1M207 344h1M284 345h1M205 346h1M203 347h1M287 347h1M201 348h1M199 349h1M290 349h1M197 351h1M293 351h1M195 352h1M296 353h1M211 364h1M283 364h1M210 365h3M282 365h3M211 366h1M283 366h1M288 380h1M296 380h1M198 381h1M210 381h1M289 381h1M295 381h1M199 382h1M209 382h1M290 382h5M200 383h1M208 383h1M289 383h1M295 383h1M80 384h1M86 384h1M200 384h1M208 384h1M288 384h1M296 384h1M81 385h1M85 385h1M200 385h1M204 385h1M208 385h1M288 385h1M296 385h1M81 386h1M83 386h1M85 386h1M200 386h1M204 386h1M208 386h1M288 386h1M296 386h1M81 387h5M200 387h9M288 387h1M296 387h1M81 388h1M83 388h1M85 388h1M200 388h1M204 388h1M208 388h1M288 388h1M296 388h1M80 389h1M83 389h1M86 389h1M200 389h1M204 389h1M208 389h1M289 389h1M295 389h1M82 390h3M199 390h1M204 390h1M209 390h1M290 390h5M82 391h1M84 391h1M198 391h1M204 391h1M210 391h1M292 391h1M83 392h1M204 392h1M292 392h1M203 393h3M292 393h1M202 394h1M206 394h1M288 394h9M202 395h1M206 395h1M292 395h1M202 396h1M206 396h1M292 396h1M203 397h3M99 401h1M105 401h1M111 401h1M98 402h2M104 402h2M110 402h1M98 403h1M100 403h1M104 403h1M106 403h1M110 403h1M97 404h1M100 404h1M103 404h1M106 404h1M109 404h1M96 405h1M100 405h1M102 405h1M106 405h1M108 405h1M96 406h1M101 406h2M107 406h2M95 407h1M101 407h1M107 407h1M99 411h1M105 411h1M111 411h1M201 411h1M205 411h1M98 412h2M104 412h2M110 412h1M202 412h3M98 413h1M100 413h1M104 413h1M106 413h1M110 413h1M201 413h1M205 413h1M97 414h1M100 414h1M103 414h1M106 414h1M109 414h1M201 414h1M205 414h1M96 415h1M100 415h1M102 415h1M106 415h1M108 415h1M201 415h1M205 415h1M96 416h1M101 416h2M107 416h2M202 416h3M95 417h1M101 417h1M107 417h1M203 417h1M201 418h5M203 419h1"/>
<path stroke="#808080" d="M240 50h1M243 50h1M247 50h1M249 50h1M256 50h1M226 51h1M230 51h1M233 51h1M240 51h1M243 51h1M247 51h1M249 51h1M256 51h1M260 51h1M263 51h1M266 51h1M223 52h1M226 52h1M230 52h1M233 52h1M240 52h1M243 52h1M247 52h1M249 52h1M256 52h1M260 52h1M263 52h1M266 52h1M273 52h1M277 52h1M213 53h1M216 53h1M223 53h1M226 53h1M230 53h1M233 53h1M240 53h1M243 53h1M247 53h1M249 53h1M256 53h1M260 53h1M263 53h1M266 53h1M273 53h1M277 53h1M280 53h1M209 54h1M213 54h1M216 54h1M223 54h1M226 54h1M230 54h1M233 54h1M240 54h1M243 54h1M247 54h1M249 54h1M256 54h1M260 54h1M263 54h1M266 54h1M273 54h1M277 54h1M280 54h1M283 54h1M206 55h1M209 55h1M213 55h1M216 55h1M223 55h1M226 55h1M230 55h1M233 55h1M240 55h1M243 55h1M247 55h1M249 55h1M256 55h1M260 55h1M263 55h1M266 55h1M273 55h1M276 55h1M280 55h1M283 55h1M290 55h1M199 56h1M206 56h1M209 56h1M214 56h1M217 56h1M223 56h1M226 56h1M230 56h1M233 56h1M240 56h1M244 56h1M247 56h1M249 56h1M256 56h1M260 56h1M263 56h1M266 56h1M273 56h1M276 56h1M279 56h1M283 56h1M290 56h1M294 56h1M196 57h1M199 57h1M206 57h1M210 57h1M214 57h1M217 57h1M223 57h1M227 57h1M231 57h1M234 57h1M240 57h1M244 57h1M247 57h1M249 57h1M256 57h1M259 57h1M262 57h1M265 57h1M273 57h1M276 57h1M279 57h1M282 57h1M290 57h1M294 57h1M297 57h1M192 58h1M196 58h1M200 58h1M207 58h1M210 58h1M214 58h1M217 58h1M224 58h1M227 58h1M231 58h1M234 58h1M240 58h1M244 58h1M247 58h1M249 58h1M256 58h1M259 58h1M262 58h1M265 58h1M272 58h1M276 58h1M279 58h1M282 58h1M289 58h1M293 58h1M297 58h1M300 58h1M189 59h1M192 59h1M197 59h1M200 59h1M207 59h1M210 59h1M214 59h1M217 59h1M224 59h1M227 59h1M231 59h1M234 59h1M240 59h1M244 59h1M247 59h1M249 59h1M256 59h1M259 59h1M262 59h1M265 59h1M272 59h1M276 59h1M279 59h1M282 59h1M289 59h1M293 59h1M296 59h1M300 59h1M189 60h1M193 60h1M197 60h1M200 60h1M207 60h1M210 60h1M214 60h1M217 60h1M224 60h1M227 60h1M231 60h1M234 60h1M240 60h1M244 60h1M247 60h1M249 60h1M256 60h1M259 60h1M262 60h1M265 60h1M272 60h1M276 60h1M279 60h1M282 60h1M289 60h1M293 60h1M296 60h1M299 60h1M307 60h1M183 61h1M190 61h1M193 61h1M197 61h1M200 61h1M207 61h1M210 61h1M214 61h1M217 61h1M224 61h1M227 61h1M231 61h1M234 61h1M240 61h1M244 61h1M247 61h1M249 61h1M256 61h1M259 61h1M262 61h1M265 61h1M272 61h1M275 61h1M279 61h1M282 61h1M289 61h1M293 61h1M296 61h1M299 61h1M307 61h1M310 61h1M179 62h1M183 62h1M190 62h1M193 62h1M197 62h1M201 62h1M207 62h1M210 62h1M215 62h1M218 62h1M224 62h1M227 62h1M231 62h1M265 62h1M272 62h1M275 62h1M278 62h1M281 62h1M289 62h1M292 62h1M295 62h1M299 62h1M306 62h1M310 62h1M313 62h1M176 63h1M179 63h1M184 63h1M190 63h1M194 63h1M198 63h1M201 63h1M208 63h1M211 63h1M215 63h1M218 63h1M224 63h1M272 63h1M275 63h1M278 63h1M281 63h1M289 63h1M292 63h1M295 63h1M298 63h1M306 63h1M309 63h1M313 63h1M317 63h1M176 64h1M180 64h1M184 64h1M190 64h1M194 64h1M198 64h1M201 64h1M208 64h1M211 64h1M215 64h1M218 64h1M278 64h1M281 64h1M288 64h1M292 64h1M295 64h1M298 64h1M305 64h1M309 64h1M312 64h1M317 64h1M173 65h1M177 65h1M180 65h1M184 65h1M191 65h1M195 65h1M198 65h1M201 65h1M208 65h1M211 65h1M288 65h1M292 65h1M295 65h1M298 65h1M305 65h1M309 65h1M312 65h1M316 65h1M173 66h1M177 66h1M180 66h1M184 66h1M191 66h1M195 66h1M198 66h1M202 66h1M288 66h1M291 66h1M294 66h1M298 66h1M305 66h1M308 66h1M312 66h1M316 66h1M323 66h1M167 67h1M174 67h1M177 67h1M181 67h1M185 67h1M191 67h1M195 67h1M199 67h1M202 67h1M291 67h1M294 67h1M297 67h1M304 67h1M308 67h1M311 67h1M315 67h1M323 67h1M326 67h1M167 68h1M174 68h1M178 68h1M181 68h1M185 68h1M191 68h1M196 68h1M199 68h1M297 68h1M304 68h1M308 68h1M311 68h1M315 68h1M322 68h1M326 68h1M329 68h1M163 69h1M168 69h1M175 69h1M178 69h1M182 69h1M185 69h1M192 69h1M303 69h1M308 69h1M311 69h1M315 69h1M322 69h1M325 69h1M329 69h1M160 70h1M164 70h1M168 70h1M175 70h1M179 70h1M182 70h1M185 70h1M303 70h1M307 70h1M311 70h1M314 70h1M321 70h1M325 70h1M328 70h1M332 70h1M161 71h1M164 71h1M168 71h1M175 71h1M179 71h1M182 71h1M186 71h1M307 71h1M310 71h1M314 71h1M321 71h1M324 71h1M328 71h1M332 71h1M157 72h1M161 72h1M165 72h1M169 72h1M176 72h1M179 72h1M183 72h1M310 72h1M313 72h1M321 72h1M324 72h1M327 72h1M331 72h1M158 73h1M162 73h1M165 73h1M169 73h1M176 73h1M180 73h1M313 73h1M320 73h1M324 73h1M327 73h1M331 73h1M339 73h1M158 74h1M162 74h1M166 74h1M170 74h1M177 74h1M180 74h1M320 74h1M323 74h1M327 74h1M330 74h1M338 74h1M151 75h1M159 75h1M163 75h1M166 75h1M170 75h1M177 75h1M319 75h1M323 75h1M326 75h1M330 75h1M338 75h1M342 75h1M152 76h1M159 76h1M163 76h1M167 76h1M170 76h1M319 76h1M322 76h1M326 76h1M330 76h1M337 76h1M341 76h1M345 76h1M148 77h1M152 77h1M160 77h1M164 77h1M167 77h1M171 77h1M322 77h1M325 77h1M329 77h1M337 77h1M341 77h1M344 77h1M149 78h1M153 78h1M160 78h1M164 78h1M168 78h1M325 78h1M329 78h1M336 78h1M340 78h1M344 78h1M348 78h1M145 79h1M149 79h1M153 79h1M161 79h1M165 79h1M168 79h1M328 79h1M335 79h1M339 79h1M343 79h1M347 79h1M142 80h1M146 80h1M150 80h1M154 80h1M161 80h1M165 80h1M328 80h1M335 80h1M339 80h1M343 80h1M347 80h1M143 81h1M146 81h1M151 81h1M155 81h1M162 81h1M334 81h1M338 81h1M342 81h1M346 81h1M143 82h1M147 82h1M151 82h1M155 82h1M162 82h1M334 82h1M337 82h1M341 82h1M345 82h1M353 82h1M144 83h1M148 83h1M152 83h1M156 83h1M333 83h1M337 83h1M341 83h1M345 83h1M352 83h1M356 83h1M137 84h1M144 84h1M148 84h1M153 84h1M156 84h1M336 84h1M340 84h1M344 84h1M352 84h1M355 84h1M138 85h1M145 85h1M149 85h1M153 85h1M157 85h1M340 85h1M343 85h1M351 85h1M355 85h1M359 85h1M134 86h1M138 86h1M146 86h1M150 86h1M154 86h1M339 86h1M343 86h1M350 86h1M354 86h1M358 86h1M135 87h1M139 87h1M146 87h1M150 87h1M342 87h1M350 87h1M354 87h1M358 87h1M362 87h1M131 88h1M135 88h1M140 88h1M147 88h1M151 88h1M349 88h1M353 88h1M357 88h1M361 88h1M132 89h1M136 89h1M140 89h1M147 89h1M348 89h1M352 89h1M357 89h1M360 89h1M128 90h1M132 90h1M137 90h1M141 90h1M148 90h1M348 90h1M352 90h1M356 90h1M360 90h1M129 91h1M133 91h1M137 91h1M142 91h1M347 91h1M351 91h1M355 91h1M359 91h1M130 92h1M134 92h1M138 92h1M142 92h1M351 92h1M355 92h1M358 92h1M367 92h1M130 93h1M134 93h1M139 93h1M143 93h1M350 93h1M354 93h1M357 93h1M366 93h1M131 94h1M135 94h1M139 94h1M354 94h1M357 94h1M365 94h1M370 94h1M123 95h1M132 95h1M136 95h1M140 95h1M353 95h1M356 95h1M365 95h1M369 95h1M124 96h1M133 96h1M136 96h1M355 96h1M364 96h1M368 96h1M373 96h1M120 97h1M125 97h1M133 97h1M137 97h1M363 97h1M367 97h1M372 97h1M121 98h1M126 98h1M134 98h1M362 98h1M366 98h1M371 98h1M375 98h1M118 99h1M122 99h1M127 99h1M362 99h1M366 99h1M370 99h1M374 99h1M119 100h1M123 100h1M127 100h1M361 100h1M365 100h1M369 100h1M373 100h1M115 101h1M120 101h1M124 101h1M128 101h1M310 101h1M364 101h1M369 101h1M372 101h1M116 102h1M121 102h1M124 102h1M129 102h1M363 102h1M368 102h1M371 102h1M117 103h1M122 103h1M125 103h1M309 103h1M367 103h1M371 103h1M381 103h1M118 104h1M122 104h1M126 104h1M366 104h1M370 104h1M380 104h1M119 105h1M123 105h1M127 105h1M308 105h1M369 105h1M379 105h1M383 105h1M110 106h1M119 106h1M124 106h1M368 106h1M378 106h1M382 106h1M111 107h1M120 107h1M125 107h1M307 107h1M377 107h1M381 107h1M112 108h1M121 108h1M376 108h1M380 108h1M385 108h1M108 109h1M113 109h1M122 109h1M306 109h1M375 109h1M379 109h1M384 109h1M109 110h1M114 110h1M374 110h1M378 110h1M383 110h1M388 110h1M105 111h1M110 111h1M115 111h1M305 111h1M373 111h1M377 111h1M382 111h1M387 111h1M106 112h1M111 112h1M116 112h1M376 112h1M381 112h1M386 112h1M103 113h1M107 113h1M112 113h1M117 113h1M304 113h1M375 113h1M380 113h1M385 113h1M104 114h1M108 114h1M113 114h1M118 114h1M208 114h1M379 114h1M384 114h1M105 115h1M109 115h1M114 115h1M209 115h1M304 115h1M378 115h1M383 115h1M393 115h1M106 116h1M110 116h1M115 116h1M210 116h1M382 116h1M392 116h1M107 117h1M111 117h1M211 117h1M303 117h1M381 117h1M391 117h1M108 118h1M112 118h1M212 118h1M380 118h1M389 118h2M395 118h1M98 119h1M109 119h1M113 119h1M213 119h1M302 119h1M388 119h1M394 119h1M99 120h1M110 120h1M214 120h1M387 120h1M393 120h1M397 120h1M96 121h1M100 121h1M111 121h1M215 121h1M301 121h1M386 121h1M391 121h2M396 121h1M97 122h1M101 122h1M216 122h1M385 122h1M390 122h1M395 122h1M98 123h1M102 123h2M300 123h1M389 123h1M393 123h2M399 123h1M94 124h1M99 124h1M104 124h1M388 124h1M392 124h1M398 124h1M95 125h1M100 125h2M105 125h1M299 125h1M387 125h1M391 125h1M397 125h1M96 126h1M102 126h1M106 126h1M390 126h1M395 126h2M92 127h1M97 127h1M103 127h1M144 127h1M298 127h1M389 127h1M394 127h1M93 128h1M98 128h2M104 128h1M393 128h1M404 128h1M94 129h2M100 129h1M146 129h1M298 129h1M392 129h1M403 129h1M96 130h1M101 130h1M401 130h2M97 131h1M102 131h1M147 131h1M297 131h1M400 131h1M406 131h1M87 132h1M98 132h2M399 132h1M404 132h2M88 133h1M100 133h1M149 133h1M296 133h1M397 133h2M403 133h1M89 134h2M396 134h1M401 134h2M408 134h1M85 135h1M91 135h1M151 135h1M295 135h1M400 135h1M406 135h2M86 136h2M92 136h1M398 136h2M405 136h1M88 137h2M93 137h2M152 137h1M294 137h1M397 137h1M403 137h2M410 137h1M83 138h1M90 138h1M95 138h1M402 138h1M408 138h2M84 139h2M91 139h2M154 139h1M293 139h1M400 139h2M407 139h1M86 140h2M93 140h2M399 140h1M405 140h2M82 141h1M88 141h1M156 141h1M292 141h1M404 141h1M83 142h2M89 142h2M402 142h2M414 142h1M85 143h1M91 143h2M158 143h1M292 143h1M401 143h1M412 143h2M86 144h2M93 144h1M410 144h2M88 145h1M159 145h1M291 145h1M409 145h1M415 145h1M78 146h1M89 146h2M407 146h2M413 146h2M79 147h2M91 147h1M161 147h1M290 147h1M405 147h2M412 147h1M81 148h1M404 148h1M410 148h2M417 148h1M76 149h1M82 149h2M163 149h1M289 149h1M409 149h1M415 149h2M77 150h2M84 150h1M407 150h2M414 150h1M79 151h2M85 151h2M164 151h1M288 151h1M406 151h1M412 151h2M419 151h1M75 152h1M81 152h1M87 152h1M411 152h1M417 152h2M76 153h2M82 153h2M166 153h1M287 153h1M409 153h2M415 153h2M78 154h1M84 154h2M408 154h1M414 154h1M73 155h1M79 155h2M86 155h1M168 155h1M286 155h1M412 155h2M74 156h2M81 156h1M410 156h2M76 157h2M82 157h2M170 157h1M286 157h1M409 157h1M421 157h2M78 158h1M84 158h1M419 158h2M79 159h2M171 159h1M285 159h1M417 159h2M81 160h2M415 160h2M423 160h2M173 161h1M284 161h1M413 161h2M421 161h2M70 162h2M412 162h1M419 162h2M72 163h2M175 163h1M283 163h1M381 163h1M417 163h2M424 163h2M74 164h3M379 164h1M415 164h2M422 164h2M68 165h2M77 165h2M177 165h1M282 165h1M377 165h1M414 165h1M420 165h2M70 166h2M79 166h2M375 166h1M418 166h2M72 167h3M178 167h1M281 167h1M416 167h2M426 167h2M67 168h2M75 168h2M373 168h1M415 168h1M423 168h3M69 169h2M77 169h2M180 169h1M371 169h1M421 169h2M71 170h3M369 170h1M418 170h3M66 171h2M74 171h2M182 171h1M280 171h1M367 171h1M417 171h1M68 172h2M76 172h2M70 173h3M183 173h1M279 173h1M365 173h1M428 173h2M73 174h2M363 174h1M426 174h2M75 175h2M185 175h1M278 175h1M361 175h1M423 175h3M359 176h1M421 176h2M430 176h2M63 177h2M187 177h1M277 177h1M419 177h2M427 177h3M65 178h2M357 178h1M425 178h2M67 179h3M189 179h1M276 179h1M355 179h1M422 179h3M431 179h2M70 180h2M353 180h1M420 180h2M428 180h3M62 181h2M72 181h2M190 181h1M275 181h1M426 181h2M64 182h3M351 182h1M423 182h3M67 183h4M101 183h1M192 183h1M274 183h1M349 183h1M422 183h1M432 183h2M61 184h2M71 184h2M103 184h1M347 184h1M428 184h4M63 185h3M105 185h1M194 185h1M274 185h1M345 185h1M424 185h4M66 186h4M107 186h1M423 186h1M60 187h2M70 187h2M109 187h1M111 187h1M195 187h1M273 187h1M343 187h1M62 188h2M113 188h1M341 188h1M64 189h3M115 189h1M197 189h1M272 189h1M339 189h1M434 189h2M67 190h2M117 190h1M337 190h1M430 190h4M69 191h2M119 191h1M199 191h1M271 191h1M426 191h4M121 192h1M335 192h1M425 192h1M435 192h2M123 193h1M201 193h1M270 193h1M333 193h1M432 193h3M58 194h2M125 194h1M127 194h1M331 194h1M430 194h2M60 195h3M129 195h1M202 195h1M269 195h1M329 195h1M427 195h3M63 196h4M131 196h1M426 196h1M436 196h2M57 197h2M67 197h2M133 197h1M204 197h1M268 197h1M327 197h1M432 197h4M59 198h3M135 198h1M325 198h1M428 198h4M62 199h4M137 199h1M206 199h1M268 199h1M323 199h1M426 199h2M437 199h2M56 200h2M66 200h2M139 200h1M321 200h1M433 200h4M58 201h4M141 201h1M143 201h1M207 201h1M267 201h1M429 201h4M62 202h4M145 202h1M319 202h1M427 202h2M66 203h2M147 203h1M209 203h1M266 203h1M317 203h1M55 204h3M149 204h1M315 204h1M58 205h6M151 205h1M211 205h1M265 205h1M313 205h1M64 206h3M153 206h1M437 206h3M155 207h1M213 207h1M264 207h1M311 207h1M432 207h5M157 208h1M159 208h1M309 208h1M429 208h3M161 209h1M214 209h1M263 209h1M307 209h1M438 209h3M163 210h1M305 210h1M432 210h6M54 211h3M165 211h1M216 211h1M262 211h1M429 211h3M57 212h5M167 212h1M303 212h1M62 213h3M169 213h1M218 213h1M262 213h1M301 213h1M439 213h3M53 214h3M171 214h1M299 214h1M433 214h6M56 215h6M173 215h1M175 215h1M219 215h1M261 215h1M430 215h3M62 216h3M177 216h1M297 216h1M439 216h3M52 217h3M179 217h1M221 217h1M260 217h1M295 217h1M433 217h6M55 218h6M181 218h1M293 218h1M430 218h3M61 219h3M183 219h1M223 219h1M259 219h1M291 219h1M185 220h1M52 221h6M187 221h1M225 221h1M258 221h1M289 221h1M58 222h6M189 222h1M191 222h1M287 222h1M193 223h1M226 223h1M257 223h1M285 223h1M437 223h6M195 224h1M283 224h1M431 224h6M197 225h1M228 225h1M256 225h1M199 226h1M281 226h1M438 226h6M201 227h1M230 227h1M256 227h1M279 227h1M432 227h6M51 228h6M203 228h1M277 228h1M57 229h6M205 229h1M207 229h1M232 229h1M255 229h1M275 229h1M209 230h1M438 230h6M51 231h6M211 231h1M233 231h1M254 231h1M273 231h1M432 231h6M57 232h5M213 232h1M271 232h1M109 233h1M215 233h1M235 233h1M253 233h1M269 233h1M438 233h6M51 234h6M110 234h1M217 234h1M267 234h1M433 234h5M57 235h5M111 235h1M219 235h1M237 235h1M252 235h1M112 236h1M221 236h1M223 236h1M265 236h1M113 237h1M225 237h1M238 237h1M251 237h1M263 237h1M50 238h12M114 238h1M227 238h1M261 238h1M115 239h1M229 239h1M240 239h1M250 239h1M259 239h1M116 240h1M231 240h1M433 240h12M117 241h1M233 241h1M242 241h1M250 241h1M257 241h1M118 242h1M235 242h1M255 242h1M237 243h1M239 243h1M244 243h1M253 243h1M439 243h6M241 244h1M251 244h1M433 244h6M50 245h12M243 245h1M245 245h1M248 245h1M245 246h1M249 246h1M50 247h12M247 247h1M433 247h12M245 248h1M249 248h1M246 249h1M249 249h1M433 249h12M56 250h6M243 250h1M253 250h1M50 251h6M241 251h1M245 251h1M250 251h1M255 251h1M257 251h1M239 252h1M259 252h1M237 253h1M244 253h1M261 253h1M50 254h12M263 254h1M235 255h1M244 255h1M254 255h1M265 255h1M233 256h1M267 256h1M433 256h12M231 257h1M243 257h1M256 257h1M269 257h1M229 258h1M271 258h1M273 258h1M242 259h1M257 259h1M275 259h1M433 259h5M57 260h5M227 260h1M277 260h1M438 260h6M51 261h6M225 261h1M241 261h1M259 261h1M279 261h1M223 262h1M281 262h1M433 262h5M57 263h6M221 263h1M240 263h1M261 263h1M283 263h1M438 263h6M51 264h6M285 264h1M219 265h1M239 265h1M262 265h1M287 265h1M289 265h1M432 265h6M217 266h1M291 266h1M438 266h6M57 267h6M215 267h1M238 267h1M264 267h1M293 267h1M51 268h6M213 268h1M295 268h1M238 269h1M266 269h1M297 269h1M58 270h6M211 270h1M299 270h1M52 271h6M209 271h1M237 271h1M268 271h1M301 271h1M207 272h1M303 272h1M305 272h1M431 272h6M205 273h1M236 273h1M269 273h1M307 273h1M437 273h6M309 274h1M203 275h1M235 275h1M271 275h1M311 275h1M431 275h3M62 276h3M201 276h1M313 276h1M434 276h6M56 277h6M199 277h1M234 277h1M273 277h1M315 277h1M440 277h3M53 278h3M197 278h1M317 278h1M430 278h3M62 279h3M233 279h1M275 279h1M319 279h1M321 279h1M433 279h6M56 280h6M195 280h1M323 280h1M439 280h3M53 281h3M193 281h1M232 281h1M276 281h1M325 281h1M430 281h3M191 282h1M327 282h1M433 282h5M63 283h3M232 283h1M278 283h1M329 283h1M438 283h3M57 284h6M189 284h1M331 284h1M54 285h3M187 285h1M231 285h1M280 285h1M333 285h1M63 286h3M185 286h1M335 286h1M337 286h1M58 287h5M183 287h1M230 287h1M281 287h1M339 287h1M55 288h3M341 288h1M428 288h3M181 289h1M229 289h1M283 289h1M343 289h1M431 289h6M179 290h1M345 290h1M437 290h3M177 291h1M228 291h1M285 291h1M347 291h1M427 291h2M66 292h2M175 292h1M349 292h1M429 292h4M62 293h4M227 293h1M287 293h1M351 293h1M353 293h1M433 293h4M58 294h4M173 294h1M355 294h1M427 294h2M437 294h2M56 295h2M67 295h2M171 295h1M226 295h1M288 295h1M357 295h1M429 295h3M63 296h4M169 296h1M359 296h1M432 296h4M59 297h4M167 297h1M226 297h1M290 297h1M361 297h1M426 297h2M436 297h2M57 298h2M68 298h1M363 298h1M428 298h3M65 299h3M165 299h1M225 299h1M292 299h1M365 299h1M431 299h4M63 300h2M163 300h1M367 300h1M369 300h1M435 300h2M60 301h3M161 301h1M224 301h1M293 301h1M371 301h1M58 302h2M69 302h1M159 302h1M373 302h1M65 303h4M223 303h1M295 303h1M375 303h1M424 303h2M61 304h4M157 304h1M377 304h1M426 304h2M59 305h2M155 305h1M222 305h1M297 305h1M379 305h1M428 305h3M153 306h1M381 306h1M431 306h2M151 307h1M221 307h1M299 307h1M383 307h1M385 307h1M423 307h2M433 307h2M71 308h1M387 308h1M425 308h3M67 309h4M149 309h1M220 309h1M300 309h1M389 309h1M428 309h4M63 310h4M147 310h1M391 310h1M422 310h2M432 310h2M61 311h2M72 311h2M145 311h1M220 311h1M302 311h1M393 311h1M424 311h3M69 312h3M143 312h1M427 312h4M67 313h2M219 313h1M304 313h1M421 313h2M431 313h2M64 314h3M73 314h2M141 314h1M423 314h2M62 315h2M70 315h3M139 315h1M218 315h1M305 315h1M425 315h3M68 316h2M137 316h1M428 316h2M65 317h3M74 317h2M217 317h1M307 317h1M430 317h2M63 318h2M72 318h2M135 318h1M69 319h3M133 319h1M216 319h1M309 319h1M418 319h2M67 320h2M131 320h1M420 320h2M65 321h2M129 321h1M215 321h1M311 321h1M422 321h3M417 322h2M425 322h2M77 323h2M127 323h1M214 323h1M312 323h1M419 323h2M427 323h2M74 324h3M421 324h3M72 325h2M123 325h1M214 325h1M314 325h1M416 325h2M424 325h2M69 326h3M78 326h2M121 326h1M418 326h2M426 326h2M67 327h2M76 327h2M213 327h1M316 327h1M420 327h3M74 328h2M119 328h1M414 328h2M423 328h2M72 329h2M79 329h2M117 329h1M212 329h1M317 329h1M416 329h2M425 329h2M70 330h2M77 330h2M115 330h1M418 330h3M69 331h1M75 331h2M113 331h1M211 331h1M319 331h1M421 331h2M73 332h2M81 332h2M423 332h2M71 333h2M79 333h2M210 333h1M321 333h1M411 333h1M70 334h1M77 334h2M412 334h2M75 335h2M323 335h1M414 335h2M73 336h2M410 336h1M416 336h1M72 337h1M85 337h1M208 337h1M324 337h1M411 337h2M417 337h2M83 338h2M413 338h1M419 338h2M81 339h2M208 339h1M326 339h1M408 339h1M414 339h2M421 339h1M80 340h1M86 340h1M409 340h2M416 340h1M78 341h2M84 341h2M207 341h1M328 341h1M411 341h2M417 341h2M76 342h2M83 342h1M407 342h1M413 342h1M419 342h1M75 343h1M81 343h2M88 343h1M206 343h1M330 343h1M408 343h2M414 343h2M80 344h1M86 344h2M410 344h1M416 344h2M78 345h2M85 345h1M205 345h1M331 345h1M411 345h2M418 345h1M77 346h1M83 346h2M90 346h1M413 346h1M82 347h1M88 347h2M204 347h1M333 347h1M403 347h1M414 347h2M80 348h2M86 348h2M404 348h2M416 348h1M79 349h1M85 349h1M203 349h1M335 349h1M406 349h1M83 350h2M401 350h1M407 350h2M81 351h2M93 351h1M202 351h1M336 351h1M402 351h2M409 351h1M80 352h1M91 352h2M404 352h2M410 352h2M90 353h1M202 353h1M338 353h1M399 353h1M406 353h1M412 353h1M88 354h2M95 354h1M400 354h2M407 354h2M87 355h1M93 355h2M201 355h1M340 355h1M398 355h1M402 355h2M409 355h2M85 356h2M92 356h1M399 356h1M404 356h1M411 356h1M84 357h1M90 357h2M97 357h1M200 357h1M342 357h1M400 357h2M405 357h2M89 358h1M95 358h2M402 358h1M407 358h2M87 359h2M94 359h1M199 359h1M343 359h1M403 359h1M409 359h1M86 360h1M92 360h2M98 360h1M404 360h2M91 361h1M96 361h2M198 361h1M345 361h1M394 361h1M406 361h1M89 362h2M95 362h1M395 362h1M407 362h1M88 363h1M94 363h1M197 363h1M301 363h1M392 363h1M396 363h2M92 364h2M302 364h1M393 364h1M398 364h1M91 365h1M102 365h1M196 365h1M302 365h1M348 365h1M394 365h1M399 365h1M90 366h1M101 366h1M303 366h1M390 366h1M395 366h1M400 366h2M99 367h2M105 367h1M196 367h1M303 367h1M350 367h1M391 367h1M396 367h2M402 367h1M98 368h1M104 368h1M304 368h1M388 368h1M392 368h1M398 368h1M97 369h1M103 369h1M107 369h1M195 369h1M304 369h1M389 369h1M393 369h1M399 369h1M96 370h1M101 370h2M106 370h1M305 370h1M390 370h1M394 370h2M400 370h1M95 371h1M100 371h1M105 371h1M194 371h1M305 371h1M391 371h1M396 371h1M99 372h1M103 372h2M109 372h1M306 372h1M392 372h2M397 372h1M98 373h1M102 373h1M108 373h1M193 373h1M383 373h1M394 373h1M398 373h1M97 374h1M101 374h1M107 374h1M384 374h1M395 374h1M100 375h1M105 375h2M192 375h1M381 375h1M385 375h1M396 375h1M99 376h1M104 376h1M114 376h1M382 376h1M386 376h1M103 377h1M113 377h1M191 377h1M383 377h1M387 377h1M102 378h1M112 378h1M379 378h1M384 378h1M388 378h1M101 379h1M111 379h1M116 379h1M190 379h1M380 379h1M385 379h1M389 379h1M110 380h1M115 380h1M376 380h1M381 380h1M386 380h1M390 380h1M109 381h1M114 381h1M119 381h1M190 381h1M377 381h1M382 381h1M387 381h1M391 381h1M108 382h1M113 382h1M118 382h1M378 382h1M383 382h1M388 382h1M107 383h1M112 383h1M117 383h1M121 383h1M189 383h1M379 383h1M384 383h1M389 383h1M106 384h1M111 384h1M116 384h1M120 384h1M380 384h1M385 384h1M110 385h1M115 385h1M119 385h1M188 385h1M372 385h1M381 385h1M386 385h1M109 386h1M114 386h1M118 386h1M373 386h1M382 386h1M113 387h1M117 387h1M187 387h1M369 387h1M374 387h1M383 387h1M112 388h1M116 388h1M126 388h1M370 388h1M375 388h1M384 388h1M111 389h1M115 389h1M125 389h1M186 389h1M367 389h1M371 389h1M376 389h1M114 390h1M124 390h1M128 390h1M368 390h1M372 390h1M376 390h1M113 391h1M123 391h1M127 391h1M185 391h1M369 391h1M373 391h1M377 391h1M122 392h1M126 392h1M131 392h1M365 392h1M370 392h1M373 392h1M378 392h1M122 393h1M125 393h1M130 393h1M184 393h1M366 393h1M371 393h1M374 393h1M379 393h1M121 394h1M124 394h1M129 394h1M133 394h1M367 394h1M371 394h1M375 394h1M120 395h1M124 395h1M128 395h1M132 395h1M368 395h1M372 395h1M376 395h1M119 396h1M123 396h1M127 396h1M131 396h1M360 396h1M368 396h1M373 396h1M122 397h1M127 397h1M131 397h1M357 397h1M361 397h1M369 397h1M374 397h1M121 398h1M126 398h1M130 398h1M358 398h1M361 398h1M370 398h1M125 399h1M129 399h1M138 399h1M354 399h1M358 399h1M362 399h1M371 399h1M124 400h1M128 400h1M137 400h1M140 400h1M355 400h1M359 400h1M363 400h1M128 401h1M137 401h1M140 401h1M144 401h1M351 401h1M355 401h1M360 401h1M364 401h1M127 402h1M136 402h1M139 402h1M143 402h1M352 402h1M356 402h1M360 402h1M364 402h1M135 403h1M139 403h1M143 403h1M147 403h1M352 403h1M357 403h1M361 403h1M365 403h1M134 404h1M138 404h1M142 404h1M146 404h1M346 404h1M353 404h1M357 404h1M362 404h1M366 404h1M134 405h1M137 405h1M142 405h1M146 405h1M347 405h1M354 405h1M358 405h1M362 405h1M133 406h1M137 406h1M141 406h1M145 406h1M343 406h1M347 406h1M354 406h1M359 406h1M363 406h1M132 407h1M136 407h1M140 407h1M144 407h1M152 407h1M344 407h1M348 407h1M355 407h1M359 407h1M136 408h1M140 408h1M144 408h1M151 408h1M155 408h1M340 408h1M344 408h1M348 408h1M356 408h1M360 408h1M135 409h1M139 409h1M143 409h1M151 409h1M154 409h1M337 409h1M341 409h1M345 409h1M349 409h1M356 409h1M139 410h1M142 410h1M150 410h1M154 410h1M158 410h1M338 410h1M341 410h1M346 410h1M350 410h1M357 410h1M138 411h1M142 411h1M149 411h1M153 411h1M157 411h1M338 411h1M342 411h1M346 411h1M350 411h1M141 412h1M149 412h1M153 412h1M157 412h1M160 412h1M332 412h1M339 412h1M343 412h1M347 412h1M351 412h1M148 413h1M152 413h1M156 413h1M160 413h1M333 413h1M339 413h1M343 413h1M348 413h1M351 413h1M147 414h1M151 414h1M155 414h1M159 414h1M166 414h1M329 414h1M333 414h1M340 414h1M344 414h1M348 414h1M352 414h1M147 415h1M151 415h1M155 415h1M159 415h1M166 415h1M326 415h1M330 415h1M334 415h1M341 415h1M345 415h1M349 415h1M146 416h1M150 416h1M154 416h1M158 416h1M165 416h1M169 416h1M323 416h1M327 416h1M330 416h1M334 416h1M341 416h1M345 416h1M150 417h1M153 417h1M157 417h1M165 417h1M169 417h1M172 417h1M323 417h1M327 417h1M331 417h1M335 417h1M342 417h1M346 417h1M149 418h1M153 418h1M157 418h1M164 418h1M168 418h1M172 418h1M175 418h1M324 418h1M328 418h1M331 418h1M335 418h1M342 418h1M152 419h1M156 419h1M164 419h1M168 419h1M171 419h1M175 419h1M317 419h1M324 419h1M328 419h1M332 419h1M336 419h1M343 419h1M156 420h1M164 420h1M167 420h1M171 420h1M174 420h1M314 420h1M317 420h1M324 420h1M329 420h1M332 420h1M336 420h1M155 421h1M163 421h1M167 421h1M170 421h1M174 421h1M181 421h1M311 421h1M314 421h1M318 421h1M325 421h1M329 421h1M333 421h1M337 421h1M163 422h1M167 422h1M170 422h1M173 422h1M181 422h1M184 422h1M311 422h1M315 422h1M318 422h1M325 422h1M330 422h1M333 422h1M337 422h1M162 423h1M166 423h1M170 423h1M173 423h1M180 423h1M184 423h1M187 423h1M308 423h1M312 423h1M315 423h1M319 423h1M326 423h1M330 423h1M334 423h1M162 424h1M166 424h1M169 424h1M173 424h1M180 424h1M183 424h1M187 424h1M191 424h1M309 424h1M312 424h1M315 424h1M319 424h1M326 424h1M331 424h1M334 424h1M165 425h1M169 425h1M172 425h1M179 425h1M183 425h1M186 425h1M191 425h1M302 425h1M309 425h1M312 425h1M316 425h1M319 425h1M326 425h1M331 425h1M165 426h1M168 426h1M172 426h1M179 426h1M183 426h1M186 426h1M190 426h1M197 426h1M295 426h1M298 426h1M303 426h1M309 426h1M313 426h1M316 426h1M320 426h1M327 426h1M168 427h1M171 427h1M179 427h1M182 427h1M186 427h1M190 427h1M197 427h1M200 427h1M203 427h1M292 427h1M295 427h1M299 427h1M303 427h1M309 427h1M313 427h1M317 427h1M320 427h1M327 427h1M171 428h1M178 428h1M182 428h1M185 428h1M189 428h1M196 428h1M200 428h1M203 428h1M206 428h1M292 428h1M296 428h1M299 428h1M303 428h1M310 428h1M314 428h1M317 428h1M321 428h1M178 429h1M182 429h1M185 429h1M189 429h1M196 429h1M199 429h1M202 429h1M206 429h1M283 429h1M286 429h1M293 429h1M296 429h1M299 429h1M303 429h1M310 429h1M314 429h1M317 429h1M321 429h1M177 430h1M182 430h1M185 430h1M189 430h1M196 430h1M199 430h1M202 430h1M206 430h1M213 430h1M216 430h1M276 430h1M279 430h1M283 430h1M286 430h1M293 430h1M296 430h1M300 430h1M304 430h1M310 430h1M314 430h1M318 430h1M177 431h1M181 431h1M185 431h1M188 431h1M195 431h1M199 431h1M202 431h1M205 431h1M213 431h1M216 431h1M219 431h1M222 431h1M270 431h1M276 431h1M279 431h1M283 431h1M286 431h1M293 431h1M296 431h1M300 431h1M304 431h1M310 431h1M315 431h1M318 431h1M181 432h1M184 432h1M188 432h1M195 432h1M198 432h1M202 432h1M205 432h1M213 432h1M216 432h1M219 432h1M222 432h1M229 432h1M263 432h1M267 432h1M270 432h1M276 432h1M279 432h1M284 432h1M287 432h1M293 432h1M297 432h1M301 432h1M304 432h1M311 432h1M315 432h1M184 433h1M187 433h1M195 433h1M198 433h1M201 433h1M205 433h1M212 433h1M215 433h1M219 433h1M222 433h1M229 433h1M232 433h1M235 433h1M238 433h1M245 433h1M247 433h1M250 433h1M254 433h1M260 433h1M263 433h1M267 433h1M270 433h1M277 433h1M280 433h1M284 433h1M287 433h1M294 433h1M297 433h1M301 433h1M304 433h1M311 433h1M187 434h1M195 434h1M198 434h1M201 434h1M205 434h1M212 434h1M215 434h1M218 434h1M222 434h1M229 434h1M232 434h1M235 434h1M238 434h1M245 434h1M247 434h1M250 434h1M254 434h1M260 434h1M263 434h1M267 434h1M270 434h1M277 434h1M280 434h1M284 434h1M287 434h1M294 434h1M297 434h1M301 434h1M305 434h1M194 435h1M198 435h1M201 435h1M205 435h1M212 435h1M215 435h1M218 435h1M222 435h1M229 435h1M232 435h1M235 435h1M238 435h1M245 435h1M247 435h1M250 435h1M254 435h1M260 435h1M263 435h1M267 435h1M270 435h1M277 435h1M280 435h1M284 435h1M287 435h1M294 435h1M297 435h1M302 435h1M305 435h1M194 436h1M197 436h1M201 436h1M205 436h1M212 436h1M215 436h1M218 436h1M222 436h1M229 436h1M232 436h1M235 436h1M238 436h1M245 436h1M247 436h1M250 436h1M254 436h1M260 436h1M263 436h1M267 436h1M270 436h1M277 436h1M280 436h1M284 436h1M287 436h1M294 436h1M298 436h1M302 436h1M197 437h1M200 437h1M204 437h1M212 437h1M215 437h1M218 437h1M221 437h1M229 437h1M232 437h1M235 437h1M238 437h1M245 437h1M247 437h1M250 437h1M254 437h1M260 437h1M263 437h1M267 437h1M271 437h1M277 437h1M280 437h1M284 437h1M288 437h1M295 437h1M298 437h1M200 438h1M204 438h1M211 438h1M215 438h1M218 438h1M221 438h1M228 438h1M231 438h1M234 438h1M238 438h1M245 438h1M247 438h1M250 438h1M254 438h1M261 438h1M264 438h1M268 438h1M271 438h1M277 438h1M280 438h1M285 438h1M288 438h1M295 438h1M204 439h1M211 439h1M214 439h1M218 439h1M221 439h1M228 439h1M231 439h1M234 439h1M238 439h1M245 439h1M247 439h1M251 439h1M254 439h1M261 439h1M264 439h1M268 439h1M271 439h1M278 439h1M281 439h1M285 439h1M288 439h1M211 440h1M214 440h1M217 440h1M221 440h1M228 440h1M231 440h1M234 440h1M238 440h1M245 440h1M247 440h1M251 440h1M254 440h1M261 440h1M264 440h1M268 440h1M271 440h1M278 440h1M281 440h1M285 440h1M214 441h1M217 441h1M221 441h1M228 441h1M231 441h1M234 441h1M238 441h1M245 441h1M247 441h1M251 441h1M254 441h1M261 441h1M264 441h1M268 441h1M271 441h1M278 441h1M281 441h1M217 442h1M221 442h1M228 442h1M231 442h1M234 442h1M238 442h1M245 442h1M247 442h1M251 442h1M254 442h1M261 442h1M264 442h1M268 442h1M271 442h1M228 443h1M231 443h1M234 443h1M238 443h1M245 443h1M247 443h1M251 443h1M254 443h1M261 443h1M264 443h1M268 443h1M238 444h1M245 444h1M247 444h1M251 444h1M254 444h1"/>
<path stroke="#ff0000" d="M294 75h1M288 76h2M293 76h1M290 77h1M293 77h1M389 77h5M290 78h1M293 78h1M388 78h1M394 78h1M289 79h1M293 79h1M387 79h1M395 79h1M289 80h1M293 80h1M386 80h1M396 80h1M288 81h1M293 81h1M385 81h1M397 81h1M288 82h8M385 82h1M397 82h1M293 83h1M385 83h1M397 83h1M385 84h1M397 84h1M385 85h1M397 85h1M386 86h1M396 86h1M387 87h1M395 87h1M387 88h1M395 88h1M383 89h1M387 89h1M395 89h1M384 90h1M386 90h1M396 90h1M385 91h1M397 91h1M398 92h1M399 93h1M211 97h1M210 98h1M200 99h2M209 99h1M202 100h1M209 100h1M203 101h1M209 101h1M203 102h1M209 102h1M410 102h3M203 103h1M209 103h1M408 103h2M413 103h2M202 104h1M209 104h1M408 104h1M414 104h1M202 105h1M209 105h1M407 105h1M415 105h1M201 106h1M209 106h1M407 106h1M411 106h1M415 106h1M201 107h1M209 107h1M407 107h1M415 107h1M200 108h1M209 108h1M408 108h1M414 108h1M200 109h1M209 109h1M408 109h2M413 109h2M199 110h1M209 110h1M410 110h3M199 111h15M209 112h1M209 113h1M646 116h3M647 117h2M646 118h1M648 118h1M641 119h1M645 119h1M642 120h1M644 120h1M643 121h1M642 122h1M644 122h1M641 123h1M645 123h1M640 124h1M217 126h1M216 127h3M217 128h1M641 156h1M647 156h1M642 157h1M646 157h1M643 158h3M642 159h1M646 159h1M641 160h1M647 160h1M641 161h1M647 161h1M641 162h1M647 162h1M642 163h1M646 163h1M643 164h3M45 172h1M39 173h2M44 173h1M41 174h1M44 174h1M41 175h1M44 175h1M40 176h1M44 176h1M40 177h1M44 177h1M39 178h1M44 178h1M39 179h8M44 180h1M39 195h5M42 196h2M640 196h1M642 196h1M644 196h1M41 197h1M43 197h1M355 197h1M641 197h1M643 197h1M645 197h1M647 197h1M40 198h1M43 198h1M641 198h1M643 198h1M645 198h3M39 199h1M43 199h1M354 199h1M641 199h1M643 199h1M645 199h1M647 199h1M38 200h1M354 200h1M641 200h1M643 200h1M645 200h1M647 200h1M29 201h1M37 201h1M354 201h1M641 201h1M643 201h1M645 201h1M647 201h1M30 202h1M36 202h1M353 202h1M641 202h1M643 202h1M645 202h1M647 202h1M31 203h1M35 203h1M353 203h1M641 203h1M643 203h1M646 203h1M32 204h1M34 204h1M352 204h1M645 204h1M647 204h1M33 205h1M352 205h1M32 206h1M34 206h1M352 206h1M31 207h1M35 207h1M351 207h1M30 208h1M36 208h1M351 208h1M29 209h1M37 209h1M351 209h1M28 210h1M350 210h1M27 211h1M350 211h1M349 212h1M349 213h1M349 214h1M348 215h1M348 216h1M348 217h1M347 218h1M347 219h1M347 220h1M346 221h1M346 222h1M345 223h1M345 224h1M345 225h1M344 226h1M344 227h1M344 228h1M343 229h1M343 230h1M342 231h1M342 232h1M342 233h1M341 234h1M341 235h1M341 236h1M340 237h1M340 238h1M339 239h1M339 240h1M339 241h1M338 242h1M338 243h1M338 244h1M337 245h1M123 246h1M337 246h1M643 246h3M122 247h3M337 247h1M641 247h2M646 247h2M123 248h1M336 248h1M641 248h1M647 248h1M336 249h1M640 249h1M648 249h1M335 250h1M640 250h1M644 250h1M648 250h1M335 251h1M640 251h1M648 251h1M335 252h1M641 252h1M647 252h1M334 253h1M641 253h2M646 253h2M334 254h1M643 254h3M334 255h1M333 256h1M333 257h1M332 258h1M332 259h1M332 260h1M331 261h1M331 262h1M331 263h1M330 264h1M330 265h1M330 266h1M77 267h3M329 267h1M78 268h2M329 268h1M77 269h1M79 269h1M328 269h1M73 270h2M76 270h1M328 270h1M72 271h1M75 271h1M328 271h1M71 272h1M76 272h1M327 272h1M71 273h1M76 273h1M327 273h1M72 274h1M75 274h1M327 274h1M73 275h2M326 275h1M326 276h1M325 277h1M325 278h1M325 279h1M324 280h1M324 281h1M324 282h1M323 283h1M323 284h1M322 285h1M322 286h1M646 286h3M322 287h1M647 287h2M321 288h1M646 288h1M648 288h1M321 289h1M642 289h2M645 289h1M321 290h1M641 290h1M644 290h1M320 291h1M640 291h1M645 291h1M320 292h1M640 292h1M645 292h1M320 293h1M641 293h1M644 293h1M319 294h1M642 294h2M319 295h1M318 296h1M647 296h1M318 297h1M641 297h2M646 297h1M318 298h1M643 298h1M646 298h1M317 299h1M643 299h1M646 299h1M317 300h1M642 300h1M646 300h1M317 301h1M642 301h1M646 301h1M316 302h1M641 302h1M646 302h1M316 303h1M641 303h8M315 304h1M646 304h1M315 305h1M315 306h1M314 307h1M314 308h1M314 309h1M313 310h1M313 311h1M313 312h1M312 313h1M312 314h1M311 315h1M311 316h1M311 317h1M310 318h1M310 319h1M310 320h1M309 321h1M336 321h4M309 322h1M326 322h10M308 323h1M317 323h9M308 324h9M298 325h11M289 326h9M307 326h1M280 327h9M307 327h1M270 328h10M307 328h1M261 329h9M306 329h1M252 330h9M306 330h1M242 331h10M305 331h1M233 332h9M305 332h1M224 333h9M305 333h1M214 334h10M304 334h1M205 335h9M304 335h1M196 336h9M304 336h1M332 336h1M186 337h10M303 337h1M331 337h3M177 338h9M303 338h1M332 338h1M172 339h1M174 339h3M302 341h1M301 342h1M301 343h1M301 344h1M300 345h1M300 346h1M300 347h1M347 347h5M299 348h1M345 348h2M352 348h2M299 349h1M344 349h1M354 349h1M298 350h1M343 350h1M355 350h1M298 351h1M342 351h1M356 351h1M298 352h1M342 352h1M356 352h1M297 353h1M341 353h1M357 353h1M297 354h1M341 354h1M357 354h1M341 355h1M349 355h1M357 355h1M191 356h1M341 356h1M357 356h1M190 357h3M341 357h1M357 357h1M191 358h1M342 358h1M356 358h1M342 359h1M356 359h1M343 360h1M355 360h1M344 361h1M354 361h1M372 361h3M345 362h2M352 362h2M370 362h2M375 362h2M347 363h5M370 363h1M376 363h1M369 364h1M377 364h1M369 365h1M373 365h1M377 365h1M369 366h1M377 366h1M370 367h1M376 367h1M370 368h2M375 368h2M372 369h3M182 371h6M186 372h2M185 373h1M187 373h1M184 374h1M187 374h1M183 375h1M187 375h1M182 376h1M187 376h1M174 377h5M181 377h1M173 378h1M179 378h2M172 379h1M180 379h1M171 380h1M181 380h1M171 381h1M181 381h1M171 382h1M181 382h1M171 383h1M181 383h1M171 384h1M181 384h1M172 385h1M180 385h1M173 386h1M179 386h1M174 387h5M308 445h3M318 445h3M307 446h1M311 446h1M317 446h1M321 446h1M306 447h1M312 447h1M316 447h1M322 447h1M306 448h1M312 448h1M316 448h1M322 448h1M306 449h1M312 449h1M316 449h1M322 449h1M307 450h1M313 450h1M315 450h1M321 450h1M308 451h1M313 451h1M315 451h1M320 451h1M313 452h1M315 452h1M313 453h1M315 453h1M314 454h1M314 455h1M289 456h3M314 456h1M290 457h2M314 457h1M289 458h1M291 458h1M314 458h1M285 459h2M288 459h1M314 459h1M284 460h1M287 460h1M314 460h1M283 461h1M288 461h1M314 461h1M283 462h1M288 462h1M284 463h1M287 463h1M285 464h2"/>
<path stroke="#0000ff" d="M103 79h1M106 79h1M109 79h1M103 80h1M105 80h1M107 80h1M109 80h1M103 81h1M106 81h1M109 81h1M104 82h1M108 82h1M105 83h3M106 84h1M104 85h5M106 86h1M106 87h1M77 95h1M81 95h1M85 95h1M78 96h1M80 96h1M82 96h1M84 96h1M86 96h1M79 97h1M83 97h1M87 97h1M79 98h1M83 98h1M87 98h1M79 99h1M83 99h1M87 99h1M79 100h1M83 100h1M87 100h1M79 101h1M83 101h1M87 101h1M79 102h1M83 102h1M87 102h1M79 103h1M83 103h1M87 103h1M79 104h1M83 104h1M87 104h1M79 105h1M83 105h1M87 105h1M79 106h1M83 106h1M87 106h1M92 106h1M79 107h1M83 107h1M87 107h1M91 107h3M79 108h1M83 108h1M87 108h1M92 108h1M79 109h1M83 109h1M87 109h1M92 109h1M88 110h1M91 110h1M89 111h2M375 130h1M378 130h1M381 130h1M375 131h1M377 131h1M379 131h1M381 131h1M375 132h1M378 132h1M381 132h1M219 133h1M376 133h1M380 133h1M377 134h3M220 135h1M378 135h1M376 136h5M220 137h1M378 137h1M378 138h1M221 139h1M221 141h1M222 143h1M223 145h1M641 146h2M646 146h2M223 147h1M640 147h1M643 147h1M645 147h1M648 147h1M640 148h1M643 148h1M645 148h1M648 148h1M224 149h1M641 149h1M643 149h1M645 149h1M647 149h1M644 150h1M224 151h1M644 151h1M644 152h1M225 153h1M644 153h1M644 154h1M225 155h1M226 157h1M226 159h1M227 161h1M227 163h1M228 165h1M228 167h1M229 169h1M230 171h1M230 173h1M451 173h5M450 174h1M456 174h1M231 175h1M447 175h3M457 175h3M446 176h1M456 176h1M460 176h1M231 177h1M445 177h1M455 177h1M461 177h1M455 178h1M461 178h1M232 179h1M447 179h3M455 179h1M461 179h1M446 180h1M450 180h1M456 180h1M460 180h1M232 181h1M445 181h1M451 181h1M457 181h3M445 182h1M451 182h1M233 183h1M445 183h1M451 183h1M461 183h1M446 184h1M450 184h1M460 184h1M233 185h1M447 185h3M457 185h3M450 186h1M456 186h1M234 187h1M451 187h5M643 187h3M641 188h2M646 188h2M234 189h1M640 189h1M645 189h1M648 189h1M79 190h1M82 190h1M85 190h1M641 190h2M645 190h1M648 190h1M78 191h2M81 191h3M85 191h2M235 191h1M640 191h1M643 191h1M646 191h2M79 192h1M82 192h1M85 192h1M640 192h1M643 192h1M648 192h1M80 193h1M82 193h1M84 193h1M236 193h1M641 193h2M646 193h2M81 194h3M643 194h3M82 195h1M236 195h1M80 196h5M82 197h1M237 197h1M82 198h1M237 199h1M238 201h1M238 203h1M458 203h3M457 204h1M461 204h2M239 205h1M458 205h1M462 205h1M459 206h1M463 206h1M239 207h1M459 207h1M463 207h1M459 208h1M463 208h1M240 209h1M458 209h1M462 209h1M457 210h1M461 210h2M240 211h1M458 211h3M241 213h1M241 215h1M242 217h1M243 219h1M243 221h1M244 223h1M93 224h1M98 224h3M105 224h1M93 225h1M97 225h1M101 225h1M105 225h1M244 225h1M93 226h1M97 226h1M101 226h1M105 226h1M646 226h3M93 227h1M97 227h1M101 227h1M105 227h1M245 227h1M647 227h2M93 228h1M98 228h3M105 228h1M646 228h1M648 228h1M94 229h1M104 229h1M245 229h1M641 229h1M645 229h1M94 230h1M104 230h1M642 230h1M644 230h1M95 231h2M102 231h2M246 231h1M643 231h1M97 232h5M642 232h1M644 232h1M99 233h1M246 233h1M641 233h1M645 233h1M99 234h1M640 234h1M99 235h1M247 235h1M95 236h9M99 237h1M247 237h1M99 238h1M99 239h1M248 239h1M99 240h1M123 241h1M249 241h1M122 242h3M123 243h1M249 243h1M250 245h1M250 247h1M251 249h1M251 251h1M252 253h1M252 255h1M642 256h3M253 257h1M641 257h1M645 257h2M642 258h1M646 258h1M253 259h1M643 259h1M647 259h1M643 260h1M647 260h1M254 261h1M643 261h1M647 261h1M642 262h1M646 262h1M254 263h1M641 263h1M645 263h2M642 264h3M255 265h1M256 267h1M256 269h1M257 271h1M257 273h1M258 275h1M258 277h1M259 279h1M259 281h1M260 283h1M260 285h1M261 287h1M262 289h1M262 291h1M263 293h1M263 295h1M264 297h1M264 299h1M265 301h1M265 303h1M266 305h1M266 307h1M267 309h1M267 311h1M268 313h1M269 315h1M145 316h1M144 317h3M269 317h1M145 318h1M270 319h1M270 321h1M120 323h5M271 323h1M119 324h1M125 324h2M118 325h1M127 325h1M271 325h1M119 326h1M128 326h1M641 326h1M644 326h1M647 326h1M120 327h1M129 327h1M272 327h1M640 327h2M643 327h3M647 327h2M121 328h1M129 328h1M641 328h1M644 328h1M647 328h1M121 329h1M130 329h1M272 329h1M642 329h1M644 329h1M646 329h1M122 330h1M130 330h1M643 330h3M122 331h1M130 331h1M273 331h1M644 331h1M122 332h1M130 332h1M642 332h5M121 333h1M130 333h1M273 333h1M644 333h1M121 334h1M129 334h1M644 334h1M120 335h1M129 335h1M274 335h1M119 336h1M128 336h1M641 336h1M644 336h1M647 336h1M118 337h1M127 337h1M275 337h1M641 337h1M643 337h1M645 337h1M647 337h1M119 338h1M125 338h2M641 338h1M644 338h1M647 338h1M120 339h5M275 339h1M642 339h1M646 339h1M643 340h3M276 341h1M644 341h1M169 342h1M642 342h5M168 343h3M276 343h1M644 343h1M169 344h1M644 344h1M277 345h1M277 347h1M278 349h1M278 351h1M279 353h1M147 354h1M153 354h1M159 354h1M147 355h1M153 355h1M159 355h1M279 355h1M146 356h3M151 356h5M158 356h3M147 357h1M153 357h1M159 357h1M280 357h1M147 358h1M153 358h1M159 358h1M148 359h1M153 359h1M158 359h1M280 359h1M148 360h1M153 360h1M158 360h1M149 361h2M153 361h1M156 361h2M281 361h1M151 362h5M153 363h1M153 364h1M153 365h1M149 366h9M153 367h1M153 368h1M270 368h1M153 369h1M269 369h3M153 370h1M270 370h1M299 408h3M298 409h1M302 409h2M299 410h1M303 410h1M300 411h1M304 411h1M300 412h1M304 412h1M300 413h1M304 413h1M299 414h1M303 414h1M298 415h1M302 415h2M299 416h3M173 448h1M176 448h1M179 448h1M172 449h2M175 449h3M179 449h2M173 450h1M176 450h1M179 450h1M174 451h1M176 451h1M178 451h1M195 451h1M211 451h1M175 452h3M196 452h1M210 452h1M176 453h1M197 453h1M209 453h1M174 454h5M198 454h1M208 454h1M176 455h1M198 455h1M208 455h1M176 456h1M199 456h1M207 456h1M199 457h1M207 457h1M199 458h1M207 458h1M195 459h17M199 460h1M207 460h1M199 461h1M207 461h1M199 462h1M207 462h1M198 463h1M208 463h1M198 464h1M208 464h1M197 465h1M209 465h1M196 466h1M210 466h1M195 467h1M211 467h1"/>
<path stroke="#008080" d="M268 94h5M267 95h1M273 95h1M266 96h1M274 96h1M265 97h1M267 97h1M273 97h1M275 97h1M264 98h1M268 98h1M272 98h1M276 98h1M264 99h1M269 99h1M271 99h1M276 99h1M264 100h1M270 100h1M276 100h1M264 101h1M269 101h1M271 101h1M276 101h1M264 102h1M268 102h1M272 102h1M276 102h1M265 103h1M267 103h1M273 103h1M275 103h1M266 104h1M274 104h1M267 105h1M273 105h1M268 106h5M266 124h1M265 125h3M266 126h1M643 346h3M642 347h1M646 347h1M641 348h1M647 348h1M641 349h1M647 349h1M641 350h1M647 350h1M642 351h1M646 351h1M641 352h2M646 352h2M640 353h1M642 353h1M646 353h1M648 353h1M641 354h1M647 354h1M643 357h3M299 358h1M642 358h1M646 358h1M298 359h3M641 359h1M643 359h1M645 359h1M647 359h1M299 360h1M641 360h1M644 360h1M647 360h1M641 361h1M643 361h1M645 361h1M647 361h1M642 362h1M646 362h1M643 363h3M308 373h5M307 374h1M313 374h1M306 375h1M314 375h1M305 376h1M315 376h1M304 377h1M316 377h1M304 378h1M316 378h1M304 379h1M316 379h1M304 380h1M316 380h1M304 381h1M316 381h1M305 382h1M315 382h1M306 383h1M314 383h1M306 384h1M314 384h1M304 385h3M314 385h3M303 386h1M306 386h1M314 386h1M317 386h1M302 387h1M306 387h1M314 387h1M318 387h1M303 388h1M305 388h1M315 388h1M317 388h1M304 389h1M316 389h1"/>
<path stroke="#00ffff" d="M355 198h1M355 201h1M354 204h1M354 207h1M353 210h1M353 213h1M353 216h1M352 219h1M352 222h1M352 225h1M351 228h1M351 231h1M351 234h1M350 237h1M350 240h1M349 243h1M130 245h1M349 246h1M132 249h1M349 249h1M348 252h1M134 253h1M348 255h1M137 257h1M348 258h1M139 261h1M347 261h1M347 264h1M141 265h1M347 267h1M144 269h1M346 270h1M146 273h1M346 273h1M345 276h1M148 277h1M345 279h1M151 281h1M345 282h1M153 285h1M344 285h1M344 288h1M156 289h1M344 291h1M158 293h1M343 294h1M160 297h1M343 297h1M343 300h1M163 301h1M342 303h1M165 305h1M342 306h1M167 309h1M341 309h1M341 312h1M170 313h1M341 315h1M172 317h1M340 318h1M174 321h1M177 325h1M179 329h1M181 333h1M327 333h2M323 334h4M319 335h4M315 336h4M184 337h1M311 337h4M307 338h4M173 339h1M303 339h4M176 340h1M179 340h1M298 340h5M182 341h1M186 341h1M294 341h4M185 342h1M188 342h1M290 342h4M191 343h1M194 343h1M286 343h4M197 344h1M282 344h4M188 345h1M200 345h1M203 345h1M278 345h4M206 346h1M209 346h1M274 346h4M212 347h1M269 347h5M215 348h1M218 348h1M265 348h4M191 349h1M221 349h1M224 349h1M261 349h4M227 350h1M257 350h4M230 351h1M233 351h1M253 351h4M236 352h1M249 352h4M193 353h1M239 353h1M242 353h1M245 353h4M240 354h6M248 354h1M236 355h4M251 355h1M232 356h4M254 356h1M257 356h1M228 357h4M260 357h1M263 357h1M224 358h4M266 358h1M220 359h4M269 359h1M272 359h1M216 360h4M275 360h1M278 360h1M213 361h3"/>
</g>
<g opacity="0.999">
<text class="h" fill="#ff0000" style="font-family:'Liberation Mono',monospace" transform="translate(80.5,298.8) scale(0.78,1)">1</text>
<text class="h" fill="#ffff00" transform="translate(134.5,382.8) scale(0.9,1)">2</text>
<text class="h" fill="#00ff00" transform="translate(228.5,423.8) scale(0.9,1)">3</text>
<text class="h" fill="#0000ff" transform="translate(322.5,407.8) scale(0.9,1)">4</text>
<text class="h" fill="#ff0000" transform="translate(386.5,354.8) scale(0.9,1)">5</text>
<text class="h" fill="#ffff00" transform="translate(417.5,287.8) scale(0.9,1)">6</text>
<text class="h" fill="#00ff00" transform="translate(414.5,204.8) scale(0.9,1)">7</text>
<text class="h" fill="#0000ff" transform="translate(360.5,120.8) scale(0.9,1)">8</text>
<text class="h" fill="#ff0000" transform="translate(266.5,79.8) scale(0.9,1)">9</text>
<text class="h" fill="#ffff00" style="font-family:'Liberation Mono',monospace" transform="translate(168.5,95.8) scale(0.78,1)">1</text>
<text class="h" fill="#ffff00" transform="translate(176.5,95.8) scale(0.9,1)">0</text>
<text class="h" fill="#00ff00" style="font-family:'Liberation Mono',monospace" transform="translate(104.5,148.8) scale(0.78,1)">1</text>
<text class="h" fill="#00ff00" style="font-family:'Liberation Mono',monospace" transform="translate(112.5,148.8) scale(0.78,1)">1</text>
<text class="h" fill="#0000ff" style="font-family:'Liberation Mono',monospace" transform="translate(73.5,215.8) scale(0.78,1)">1</text>
<text class="h" fill="#0000ff" transform="translate(81.5,215.8) scale(0.9,1)">2</text>
<text class="c" font-size="24.5" fill="#ff0000" x="100" y="260" textLength="18.5" lengthAdjust="spacingAndGlyphs">Asc</text>
<text class="c" font-size="24.5" fill="#0000ff" x="274" y="402" textLength="18.5" lengthAdjust="spacingAndGlyphs" style="font-family:'Liberation Mono',monospace">IC</text>
<text class="c" font-size="24.5" fill="#00ff00" x="397" y="256" textLength="18.5" lengthAdjust="spacingAndGlyphs">Des</text>
<text class="c" font-size="24.5" fill="#ffff00" x="224" y="109" textLength="18.5" lengthAdjust="spacingAndGlyphs">MC</text>
<text class="m" x="502" y="14" fill="#ffffff" xml:space="preserve" transform="translate(0,14) scale(1,1.06) translate(0,-14)">Astrolog 5.41G</text>
<text class="m" x="502" y="24" fill="#ffffff" xml:space="preserve" transform="translate(0,24) scale(1,1.06) translate(0,-24)">Sat 30 April 2005</text>
<text class="m" x="502" y="34" fill="#ffffff" xml:space="preserve" transform="translate(0,34) scale(1,1.06) translate(0,-34)">21:52:00 (ST +8:00 GMT)</text>
<text class="m" x="502" y="44" fill="#c0c0c0" xml:space="preserve" transform="translate(0,44) scale(1,1.06) translate(0,-44)">120°17'00&quot;E 22°37'00&quot;N</text>
<text class="m" x="502" y="54" fill="#c0c0c0" xml:space="preserve" transform="translate(0,54) scale(1,1.06) translate(0,-54)">Placidus houses.</text>
<text class="m" x="502" y="64" fill="#c0c0c0" xml:space="preserve" transform="translate(0,64) scale(1,1.06) translate(0,-64)">Tropical, Geocentric.</text>
<text class="m" x="502" y="74" fill="#ffffff" xml:space="preserve" transform="translate(0,74) scale(1,1.06) translate(0,-74)">Julian Day = 2453491.0778</text>
<text class="m" x="502" y="84" fill="#c0c0c0" xml:space="preserve" transform="translate(0,84) scale(1,1.06) translate(0,-84)">Obliquity = 23°26'19&quot;</text>
<text class="m" x="502" y="94" fill="#c0c0c0" xml:space="preserve" transform="translate(0,94) scale(1,1.06) translate(0,-94)">Sidereal time: 12:27:34</text>
<text class="m" x="502" y="104" fill="#c0c0c0" xml:space="preserve" transform="translate(0,104) scale(1,1.06) translate(0,-104)">DeltaT =  71.6113</text>
<text class="m" x="502" y="124" fill="#ff0000" xml:space="preserve" transform="translate(0,124) scale(1,1.06) translate(0,-124)"> 1st house:</text>
<text class="m" x="574" y="124" fill="#ff0000" xml:space="preserve" transform="translate(0,124) scale(1,1.06) translate(0,-124)">26Sag48</text>
<text class="m" x="502" y="134" fill="#ffff00" xml:space="preserve" transform="translate(0,134) scale(1,1.06) translate(0,-134)"> 2nd house:</text>
<text class="m" x="574" y="134" fill="#ffff00" xml:space="preserve" transform="translate(0,134) scale(1,1.06) translate(0,-134)">28Cap49</text>
<text class="m" x="502" y="144" fill="#00ff00" xml:space="preserve" transform="translate(0,144) scale(1,1.06) translate(0,-144)"> 3rd house:</text>
<text class="m" x="574" y="144" fill="#0000ff" xml:space="preserve" transform="translate(0,144) scale(1,1.06) translate(0,-144)"> 3Pis32</text>
<text class="m" x="502" y="154" fill="#0000ff" xml:space="preserve" transform="translate(0,154) scale(1,1.06) translate(0,-154)"> 4th house:</text>
<text class="m" x="574" y="154" fill="#ff0000" xml:space="preserve" transform="translate(0,154) scale(1,1.06) translate(0,-154)"> 7Ari30</text>
<text class="m" x="502" y="164" fill="#ff0000" xml:space="preserve" transform="translate(0,164) scale(1,1.06) translate(0,-164)"> 5th house:</text>
<text class="m" x="574" y="164" fill="#ffff00" xml:space="preserve" transform="translate(0,164) scale(1,1.06) translate(0,-164)"> 7Tau16</text>
<text class="m" x="502" y="174" fill="#ffff00" xml:space="preserve" transform="translate(0,174) scale(1,1.06) translate(0,-174)"> 6th house:</text>
<text class="m" x="574" y="174" fill="#00ff00" xml:space="preserve" transform="translate(0,174) scale(1,1.06) translate(0,-174)"> 2Gem54</text>
<text class="m" x="502" y="184" fill="#00ff00" xml:space="preserve" transform="translate(0,184) scale(1,1.06) translate(0,-184)"> 7th house:</text>
<text class="m" x="574" y="184" fill="#00ff00" xml:space="preserve" transform="translate(0,184) scale(1,1.06) translate(0,-184)">26Gem48</text>
<text class="m" x="502" y="194" fill="#0000ff" xml:space="preserve" transform="translate(0,194) scale(1,1.06) translate(0,-194)"> 8th house:</text>
<text class="m" x="574" y="194" fill="#0000ff" xml:space="preserve" transform="translate(0,194) scale(1,1.06) translate(0,-194)">28Can49</text>
<text class="m" x="502" y="204" fill="#ff0000" xml:space="preserve" transform="translate(0,204) scale(1,1.06) translate(0,-204)"> 9th house:</text>
<text class="m" x="574" y="204" fill="#ffff00" xml:space="preserve" transform="translate(0,204) scale(1,1.06) translate(0,-204)"> 3Vir32</text>
<text class="m" x="502" y="214" fill="#ffff00" xml:space="preserve" transform="translate(0,214) scale(1,1.06) translate(0,-214)">10th house:</text>
<text class="m" x="574" y="214" fill="#00ff00" xml:space="preserve" transform="translate(0,214) scale(1,1.06) translate(0,-214)"> 7Lib30</text>
<text class="m" x="502" y="224" fill="#00ff00" xml:space="preserve" transform="translate(0,224) scale(1,1.06) translate(0,-224)">11th house:</text>
<text class="m" x="574" y="224" fill="#0000ff" xml:space="preserve" transform="translate(0,224) scale(1,1.06) translate(0,-224)"> 7Sco16</text>
<text class="m" x="502" y="234" fill="#0000ff" xml:space="preserve" transform="translate(0,234) scale(1,1.06) translate(0,-234)">12th house:</text>
<text class="m" x="574" y="234" fill="#ff0000" xml:space="preserve" transform="translate(0,234) scale(1,1.06) translate(0,-234)"> 2Sag54</text>
<text class="m" x="502" y="254" fill="#ff0000" xml:space="preserve" transform="translate(0,254) scale(1,1.06) translate(0,-254)"> Sun:</text>
<text class="m" x="538" y="254" fill="#ffff00" xml:space="preserve" transform="translate(0,254) scale(1,1.06) translate(0,-254)">10Tau19</text>
<text class="m" x="592" y="254" fill="#c0c0c0" xml:space="preserve" transform="translate(0,254) scale(1,1.06) translate(0,-254)">- 0°00'</text>
<text class="m" x="502" y="264" fill="#0000ff" xml:space="preserve" transform="translate(0,264) scale(1,1.06) translate(0,-264)">Moon:</text>
<text class="m" x="538" y="264" fill="#00ff00" xml:space="preserve" transform="translate(0,264) scale(1,1.06) translate(0,-264)"> 1Aqu10</text>
<text class="m" x="592" y="264" fill="#c0c0c0" xml:space="preserve" transform="translate(0,264) scale(1,1.06) translate(0,-264)">- 5°12'</text>
<text class="m" x="502" y="274" fill="#00ff00" xml:space="preserve" transform="translate(0,274) scale(1,1.06) translate(0,-274)">Merc:</text>
<text class="m" x="538" y="274" fill="#ff0000" xml:space="preserve" transform="translate(0,274) scale(1,1.06) translate(0,-274)">13Ari39</text>
<text class="m" x="592" y="274" fill="#c0c0c0" xml:space="preserve" transform="translate(0,274) scale(1,1.06) translate(0,-274)">- 2°54'</text>
<text class="m" x="502" y="284" fill="#ffff00" xml:space="preserve" transform="translate(0,284) scale(1,1.06) translate(0,-284)">Venu:</text>
<text class="m" x="538" y="284" fill="#ffff00" xml:space="preserve" transform="translate(0,284) scale(1,1.06) translate(0,-284)">18Tau11</text>
<text class="m" x="592" y="284" fill="#c0c0c0" xml:space="preserve" transform="translate(0,284) scale(1,1.06) translate(0,-284)">- 0°26'</text>
<text class="m" x="502" y="294" fill="#ff0000" xml:space="preserve" transform="translate(0,294) scale(1,1.06) translate(0,-294)">Mars:</text>
<text class="m" x="538" y="294" fill="#00ff00" xml:space="preserve" transform="translate(0,294) scale(1,1.06) translate(0,-294)">29Aqu36</text>
<text class="m" x="592" y="294" fill="#c0c0c0" xml:space="preserve" transform="translate(0,294) scale(1,1.06) translate(0,-294)">- 1°36'</text>
<text class="m" x="502" y="304" fill="#ff0000" xml:space="preserve" transform="translate(0,304) scale(1,1.06) translate(0,-304)">Jupi:</text>
<text class="m" x="538" y="304" fill="#00ff00" xml:space="preserve" transform="translate(0,304) scale(1,1.06) translate(0,-304)">10Lib47</text>
<text class="m" x="580" y="304" fill="#ffffff" xml:space="preserve" transform="translate(0,304) scale(1,1.06) translate(0,-304)">R</text>
<text class="m" x="592" y="304" fill="#c0c0c0" xml:space="preserve" transform="translate(0,304) scale(1,1.06) translate(0,-304)">+ 1°33'</text>
<text class="m" x="502" y="314" fill="#ffff00" xml:space="preserve" transform="translate(0,314) scale(1,1.06) translate(0,-314)">Satu:</text>
<text class="m" x="538" y="314" fill="#0000ff" xml:space="preserve" transform="translate(0,314) scale(1,1.06) translate(0,-314)">21Can47</text>
<text class="m" x="592" y="314" fill="#c0c0c0" xml:space="preserve" transform="translate(0,314) scale(1,1.06) translate(0,-314)">+ 0°10'</text>
<text class="m" x="502" y="324" fill="#00ff00" xml:space="preserve" transform="translate(0,324) scale(1,1.06) translate(0,-324)">Uran:</text>
<text class="m" x="538" y="324" fill="#0000ff" xml:space="preserve" transform="translate(0,324) scale(1,1.06) translate(0,-324)"> 9Pis57</text>
<text class="m" x="592" y="324" fill="#c0c0c0" xml:space="preserve" transform="translate(0,324) scale(1,1.06) translate(0,-324)">- 0°45'</text>
<text class="m" x="502" y="334" fill="#0000ff" xml:space="preserve" transform="translate(0,334) scale(1,1.06) translate(0,-334)">Nept:</text>
<text class="m" x="538" y="334" fill="#00ff00" xml:space="preserve" transform="translate(0,334) scale(1,1.06) translate(0,-334)">17Aqu30</text>
<text class="m" x="592" y="334" fill="#c0c0c0" xml:space="preserve" transform="translate(0,334) scale(1,1.06) translate(0,-334)">- 0°07'</text>
<text class="m" x="502" y="344" fill="#0000ff" xml:space="preserve" transform="translate(0,344) scale(1,1.06) translate(0,-344)">Plut:</text>
<text class="m" x="538" y="344" fill="#ff0000" xml:space="preserve" transform="translate(0,344) scale(1,1.06) translate(0,-344)">24Sag13</text>
<text class="m" x="580" y="344" fill="#ffffff" xml:space="preserve" transform="translate(0,344) scale(1,1.06) translate(0,-344)">R</text>
<text class="m" x="592" y="344" fill="#c0c0c0" xml:space="preserve" transform="translate(0,344) scale(1,1.06) translate(0,-344)">+ 8°17'</text>
<text class="m" x="502" y="354" fill="#008080" xml:space="preserve" transform="translate(0,354) scale(1,1.06) translate(0,-354)">Node:</text>
<text class="m" x="538" y="354" fill="#ff0000" xml:space="preserve" transform="translate(0,354) scale(1,1.06) translate(0,-354)">21Ari59</text>
<text class="m" x="580" y="354" fill="#ffffff" xml:space="preserve" transform="translate(0,354) scale(1,1.06) translate(0,-354)">R</text>
<text class="m" x="592" y="354" fill="#c0c0c0" xml:space="preserve" transform="translate(0,354) scale(1,1.06) translate(0,-354)">+ 0°00'</text>
<text class="m" x="502" y="364" fill="#008080" xml:space="preserve" transform="translate(0,364) scale(1,1.06) translate(0,-364)">Fort:</text>
<text class="m" x="538" y="364" fill="#ffff00" xml:space="preserve" transform="translate(0,364) scale(1,1.06) translate(0,-364)">17Vir39</text>
<text class="m" x="502" y="374" fill="#ff0000" xml:space="preserve" transform="translate(0,374) scale(1,1.06) translate(0,-374)">Asce:</text>
<text class="m" x="538" y="374" fill="#ff0000" xml:space="preserve" transform="translate(0,374) scale(1,1.06) translate(0,-374)">26Sag48</text>
<text class="c" font-size="13" font-weight="bold" fill="#ff0000" x="644.5" y="375" textLength="9" lengthAdjust="spacingAndGlyphs">Asc</text>
<text class="m" x="502" y="384" fill="#ffff00" xml:space="preserve" transform="translate(0,384) scale(1,1.06) translate(0,-384)">Midh:</text>
<text class="m" x="538" y="384" fill="#00ff00" xml:space="preserve" transform="translate(0,384) scale(1,1.06) translate(0,-384)"> 7Lib30</text>
<text class="c" font-size="13" font-weight="bold" fill="#ffff00" x="644.5" y="385" textLength="9" lengthAdjust="spacingAndGlyphs">MC</text>
<text class="m" x="502" y="404" fill="#c0c0c0" xml:space="preserve" transform="translate(0,404) scale(1,1.06) translate(0,-404)">Fire: 5, Earth: 3,</text>
<text class="m" x="502" y="414" fill="#c0c0c0" xml:space="preserve" transform="translate(0,414) scale(1,1.06) translate(0,-414)">Air : 6, Water: 2</text>
<text class="m" x="502" y="424" fill="#c0c0c0" xml:space="preserve" transform="translate(0,424) scale(1,1.06) translate(0,-424)">Car: 6, Fix: 5, Mut: 5</text>
<text class="m" x="502" y="434" fill="#c0c0c0" xml:space="preserve" transform="translate(0,434) scale(1,1.06) translate(0,-434)">Yang: 11, Yin: 5</text>
<text class="m" x="502" y="444" fill="#c0c0c0" xml:space="preserve" transform="translate(0,444) scale(1,1.06) translate(0,-444)">M: 4, N: 8, A: 6, D: 6</text>
<text class="m" x="502" y="454" fill="#c0c0c0" xml:space="preserve" transform="translate(0,454) scale(1,1.06) translate(0,-454)">Ang: 4, Suc: 5, Cad: 3</text>
<text class="m" x="502" y="464" fill="#c0c0c0" xml:space="preserve" transform="translate(0,464) scale(1,1.06) translate(0,-464)">Learn: 8, Share: 8</text>
</g>
</svg>
</body></html>
